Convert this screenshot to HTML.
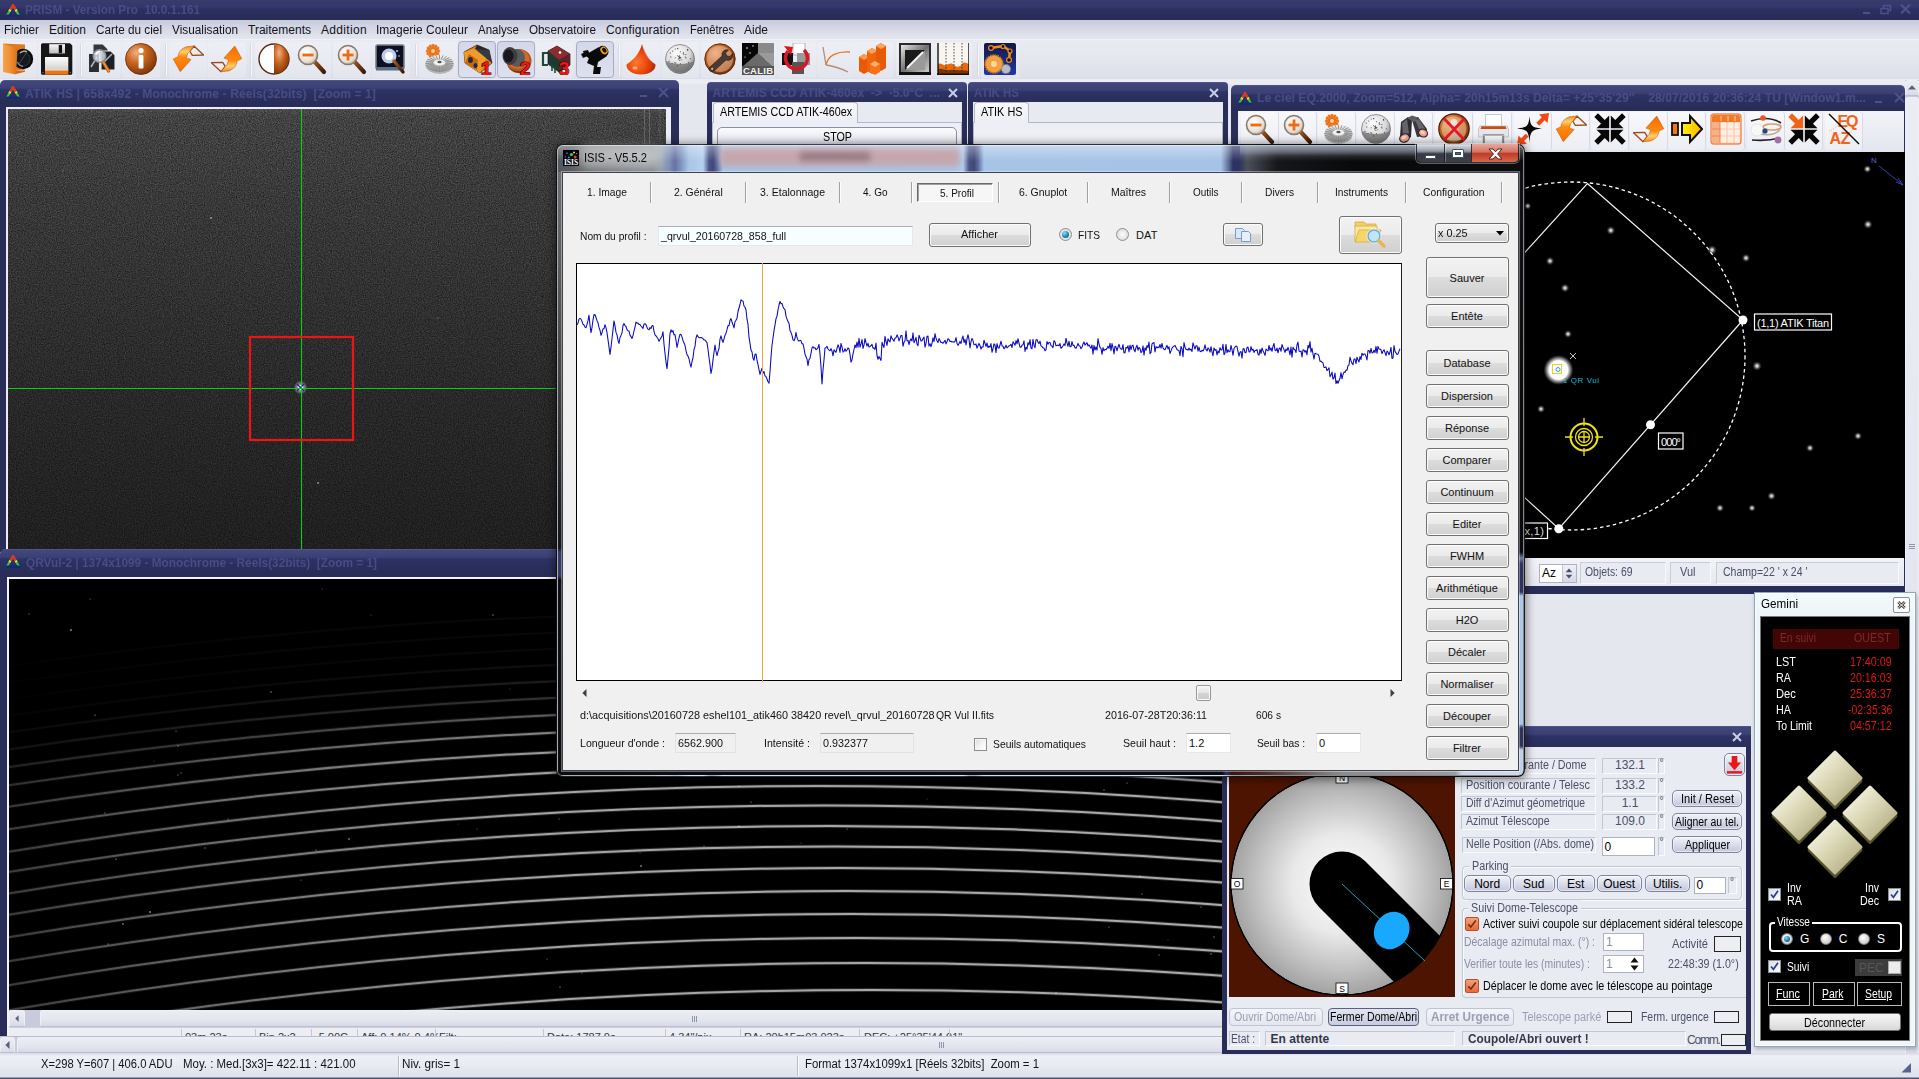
<!DOCTYPE html>
<html lang="fr"><head><meta charset="utf-8"><title>PRISM - Version Pro 10.0.1.161</title>
<style>
html,body{margin:0;padding:0;background:#e5e7ee;overflow:hidden}
#root{position:relative;width:1919px;height:1079px;overflow:hidden;background:#e5e7ee;font-family:"Liberation Sans",sans-serif;font-size:11px}
#root div,#root span.t,#root svg{position:absolute;box-sizing:border-box}
.t{white-space:pre;display:block}
.ls{font-family:"Liberation Sans",sans-serif}
.dv{font-family:"DejaVu Sans",sans-serif}
.dvc{font-family:"DejaVu Sans Condensed","DejaVu Sans",sans-serif}
.lm{font-family:"Liberation Mono",monospace}
.clip{overflow:hidden}
.btn7{border:1px solid #707070;border-radius:3px;background:linear-gradient(#f2f2f2 0%,#ebebeb 49%,#dddddd 50%,#cfcfcf 100%);box-shadow:inset 0 0 0 1px #fcfcfc}
.pbtn{border:1px solid #8084a0;border-radius:5px;background:linear-gradient(#f2f3f9 0%,#dcdfec 45%,#c3c7da 100%);box-shadow:inset 0 0 0 1px rgba(255,255,255,.55)}
.sbtn{border:1px solid #eff0f6;border-bottom-color:#bcbfd0;border-radius:3px;background:linear-gradient(#ebedf4,#e5e7f0 50%,#d8dbe7)}

</style></head>
<body>
<div id="root">
<svg width="0" height="0" style="left:0;top:0"><defs>
<radialGradient id="gCop" cx="35%" cy="30%" r="75%"><stop offset="0" stop-color="#f0b080"/><stop offset=".45" stop-color="#c8641e"/><stop offset="1" stop-color="#7a3408"/></radialGradient>
<linearGradient id="gOr" x1="0" y1="0" x2="1" y2="1"><stop offset="0" stop-color="#ffb050"/><stop offset=".5" stop-color="#f47a10"/><stop offset="1" stop-color="#c85000"/></linearGradient>
<linearGradient id="gUndo" x1="0" y1="0" x2="0" y2="1"><stop offset="0" stop-color="#f08a20"/><stop offset=".22" stop-color="#ffd070"/><stop offset=".42" stop-color="#ff8a10"/><stop offset="1" stop-color="#f86c00"/></linearGradient><linearGradient id="gFold" x1="0" y1="0" x2="1" y2="0"><stop offset="0" stop-color="#f6a44e"/><stop offset=".55" stop-color="#ee8c30"/><stop offset="1" stop-color="#d87018"/></linearGradient><linearGradient id="gShut" x1="0" y1="0" x2="0" y2="1"><stop offset="0" stop-color="#fafafa"/><stop offset="1" stop-color="#bcbcbc"/></linearGradient><linearGradient id="gLabel" x1="0" y1="0" x2="0" y2="1"><stop offset="0" stop-color="#ffffff"/><stop offset=".8" stop-color="#d4d4d4"/><stop offset="1" stop-color="#f0e0d0"/></linearGradient><linearGradient id="gOrV" x1="0" y1="0" x2="0" y2="1"><stop offset="0" stop-color="#ffa040"/><stop offset="1" stop-color="#d85a00"/></linearGradient>
<radialGradient id="gGlass" cx="40%" cy="35%" r="70%"><stop offset="0" stop-color="#ffffff"/><stop offset=".7" stop-color="#e6e0d8"/><stop offset="1" stop-color="#b8aca0"/></radialGradient>
<linearGradient id="gHandle" x1="0" y1="0" x2="1" y2="1"><stop offset="0" stop-color="#a85a20"/><stop offset="1" stop-color="#3a1a08"/></linearGradient>
<radialGradient id="gSph" cx="40%" cy="30%" r="75%"><stop offset="0" stop-color="#ffffff"/><stop offset=".6" stop-color="#d8d8d8"/><stop offset="1" stop-color="#707070"/></radialGradient>
<linearGradient id="gGear" x1="0" y1="0" x2="0" y2="1"><stop offset="0" stop-color="#f4f4f4"/><stop offset="1" stop-color="#8c8c8c"/></linearGradient>
<linearGradient id="gMet" x1="0" y1="0" x2="1" y2="1"><stop offset="0" stop-color="#e8e8e8"/><stop offset=".5" stop-color="#707070"/><stop offset="1" stop-color="#d0d0d0"/></linearGradient>
<linearGradient id="gYel" x1="0" y1="0" x2="1" y2="0"><stop offset="0" stop-color="#fff200"/><stop offset="1" stop-color="#ffb400"/></linearGradient>
<linearGradient id="gBlueBg" x1="0" y1="0" x2="0" y2="1"><stop offset="0" stop-color="#101848"/><stop offset="1" stop-color="#2038a8"/></linearGradient>
<radialGradient id="gCone" cx="35%" cy="60%" r="70%"><stop offset="0" stop-color="#ff7a30"/><stop offset=".6" stop-color="#e84008"/><stop offset="1" stop-color="#a02800"/></radialGradient>
</defs></svg>
<div style="left:0px;top:0px;width:1919px;height:20px;background:linear-gradient(#383c6c 0,#33376a 7px,#2c3062 9px,#272b55 20px)"></div>
<svg style="left:5px;top:3px" width="16" height="14" viewBox="0 0 16 14"><path d="M2.200 12.800L8 2.200l5.800 10.600z" fill="none" stroke="#1a2a7a" stroke-width="2.600" stroke-linejoin="round"/><path d="M2.600 11.500L8 2.200" stroke="#38c838" stroke-width="2.200" stroke-linecap="round"/><path d="M13.400 11.500L8 2.200" stroke="#38c838" stroke-width="2.200" stroke-linecap="round"/><path d="M5.600 5.800L8 2.200l2.400 3.600" fill="none" stroke="#e83020" stroke-width="2.200" stroke-linecap="round" stroke-linejoin="round"/><path d="M4.400 8.200l.9-1.600M11.600 8.200l-.9-1.600" stroke="#f0e030" stroke-width="2.200"/><path d="M2.400 12.600h11.200" stroke="#182878" stroke-width="2.200" stroke-linecap="round"/></svg>
<span class="t ls" style="left:25.0px;top:2.0px;font-size:12px;line-height:16px;color:#474d84;font-weight:700;transform:scaleX(0.9790);transform-origin:0 50%;">PRISM - Version Pro  10.0.1.161</span>
<svg style="left:1863px;top:2px" width="50" height="14" viewBox="0 0 50 14"><rect x="0" y="10" width="7" height="2" fill="#4b5189"/><path d="M18 6.500h7v5h-7zM20.500 6V3.500h7v5H25.500" fill="none" stroke="#4b5189" stroke-width="1.500"/><path d="M38 2.500l9 9M47 2.500l-9 9" stroke="#4b5189" stroke-width="2.200"/></svg>
<div style="left:0px;top:20px;width:1919px;height:20px;background:linear-gradient(#c8cbdb 0,#d5d8e4 45%,#e4e6ee 100%);border-bottom:1px solid #f0f1f6"></div>
<span class="t ls" style="left:4.0px;top:22.0px;font-size:12px;line-height:16px;color:#10121c;transform:scaleX(0.9718);transform-origin:0 50%;">Fichier</span>
<span class="t ls" style="left:49.0px;top:22.0px;font-size:12px;line-height:16px;color:#10121c;letter-spacing:0.042px;">Edition</span>
<span class="t ls" style="left:96.0px;top:22.0px;font-size:12px;line-height:16px;color:#10121c;transform:scaleX(0.9796);transform-origin:0 50%;">Carte du ciel</span>
<span class="t ls" style="left:172.0px;top:22.0px;font-size:12px;line-height:16px;color:#10121c;transform:scaleX(0.9828);transform-origin:0 50%;">Visualisation</span>
<span class="t ls" style="left:248.0px;top:22.0px;font-size:12px;line-height:16px;color:#10121c;letter-spacing:0.009px;">Traitements</span>
<span class="t ls" style="left:321.0px;top:22.0px;font-size:12px;line-height:16px;color:#10121c;letter-spacing:0.328px;">Addition</span>
<span class="t ls" style="left:376.0px;top:22.0px;font-size:12px;line-height:16px;color:#10121c;transform:scaleX(0.9995);transform-origin:0 50%;">Imagerie Couleur</span>
<span class="t ls" style="left:478.0px;top:22.0px;font-size:12px;line-height:16px;color:#10121c;transform:scaleX(0.9601);transform-origin:0 50%;">Analyse</span>
<span class="t ls" style="left:529.0px;top:22.0px;font-size:12px;line-height:16px;color:#10121c;transform:scaleX(0.9752);transform-origin:0 50%;">Observatoire</span>
<span class="t ls" style="left:606.0px;top:22.0px;font-size:12px;line-height:16px;color:#10121c;letter-spacing:0.162px;">Configuration</span>
<span class="t ls" style="left:690.0px;top:22.0px;font-size:12px;line-height:16px;color:#10121c;transform:scaleX(0.9291);transform-origin:0 50%;">Fenêtres</span>
<span class="t ls" style="left:744.0px;top:22.0px;font-size:12px;line-height:16px;color:#10121c;transform:scaleX(0.9987);transform-origin:0 50%;">Aide</span>
<div style="left:0px;top:40px;width:1919px;height:39px;background:linear-gradient(#e9ebf2,#e6e8f0 40%,#dcdfe9 100%)"></div>
<div style="left:0px;top:79px;width:1919px;height:5px;background:#ecedf3"></div>
<div style="left:-1px;top:42px;width:38px;height:36px;background:linear-gradient(#f0f1f7,#e6e8f0);border-radius:3px;opacity:.7"></div>
<svg style="left:2px;top:43px" width="32" height="32" viewBox="0 0 32 32"><path d="M1 .5L23 1.400V26.500L14 27.500 1 29z" fill="#e07a20"/><circle cx="21" cy="16" r="10.200" fill="#0c0c0e"/><circle cx="21" cy="16" r="7" fill="#15181c" stroke="#2c3034" stroke-width="1.200"/><path d="M18 10c2-2 5-2.500 7-1" stroke="#c8d8c8" stroke-width="1.500" fill="none" opacity=".8"/><path d="M15.500 19c1 2.500 3 4 5.500 4.500" stroke="#9ab0c8" stroke-width="1.300" fill="none" opacity=".7"/><path d="M17 21L25 9" stroke="#5a6a5a" stroke-width=".8" opacity=".8"/><path d="M1 .8L15.500 5.500 14 31.600 1 29z" fill="url(#gFold)"/><path d="M14 27.500h9v1.200l-9 2.300z" fill="#d06a14"/></svg>
<div style="left:38px;top:42px;width:38px;height:36px;background:linear-gradient(#f0f1f7,#e6e8f0);border-radius:3px;opacity:.7"></div>
<svg style="left:41px;top:43px" width="32" height="32" viewBox="0 0 32 32"><path d="M1.500 .3H29l2.300 2.300V30.300a1.500 1.500 0 0 1-1.500 1.500H1.500A1.500 1.500 0 0 1 0 30.300V1.800A1.500 1.500 0 0 1 1.500 .3z" fill="#161616"/><rect x="8.200" y="1.200" width="15.800" height="9.300" fill="url(#gShut)"/><rect x="17.750" y="2" width="3.300" height="7.900" fill="#0c0c0c"/><rect x="4" y="14" width="23.300" height="14.700" fill="url(#gLabel)"/><rect x="4" y="27.600" width="23.300" height="4" fill="#f07410"/><circle cx="2" cy="29.500" r=".6" fill="#999"/><circle cx="29.300" cy="29.500" r=".6" fill="#999"/></svg>
<div style="left:83px;top:42px;width:38px;height:36px;background:linear-gradient(#f0f1f7,#e6e8f0);border-radius:3px;opacity:.7"></div>
<svg style="left:86px;top:43px" width="32" height="32" viewBox="0 0 32 32"><path d="M7 1h10l5 5v12H7z" fill="#34373c" stroke="#e8e8e8" stroke-width="1.100"/><path d="M2.500 10.500h11v19h-11z" fill="#2a2d32" stroke="#e8e8e8" stroke-width="1.100"/><path d="M15 8h10l4 4v15H15z" fill="#1c1f24" stroke="#e8e8e8" stroke-width="1.100"/><path d="M5 24l6-10M17 20l9-9" stroke="#cfd4da" stroke-width="1.600" opacity=".8"/><path d="M17.500 19.500l5 8.500" stroke="#c8641c" stroke-width="3.400" stroke-linecap="round"/><path d="M17.500 19.500l5 8.500" stroke="#f0a050" stroke-width="1.200" stroke-linecap="round"/><circle cx="13.500" cy="13" r="6.300" fill="#dfe6ee" fill-opacity=".8" stroke="#8a8e94" stroke-width="1.500"/><path d="M10 12a4 4 0 0 1 4-3.500" stroke="#fff" stroke-width="1.300" fill="none"/></svg>
<div style="left:122px;top:42px;width:38px;height:36px;background:linear-gradient(#f0f1f7,#e6e8f0);border-radius:3px;opacity:.7"></div>
<svg style="left:125px;top:43px" width="32" height="32" viewBox="0 0 32 32"><circle cx="16" cy="16" r="15.500" fill="url(#gCop)" stroke="#6a2c06" stroke-width=".8"/><circle cx="16" cy="7.500" r="2.600" fill="#fff"/><rect x="13.600" y="12" width="4.800" height="13.500" rx="1.200" fill="#fff"/></svg>
<div style="left:169px;top:42px;width:38px;height:36px;background:linear-gradient(#f0f1f7,#e6e8f0);border-radius:3px;opacity:.7"></div>
<svg style="left:172px;top:43px" width="32" height="32" viewBox="0 0 32 32"><path d="M22 3L31.500 12 20.300 12.400 17.800 8.250z" fill="#f6efe8" fill-opacity=".6" stroke="#9a4a20" stroke-width="1.300" stroke-linejoin="round"/><path d="M6 13.700C6.300 9.500 9 5.500 14.500 3.700L22 3 17.800 8.250C16 9.300 15.200 11.500 14.500 14.900L19.100 16.600 8.250 28.700 1.200 16z" fill="url(#gUndo)" stroke="#b85408" stroke-width=".5" stroke-linejoin="round"/></svg>
<div style="left:208px;top:42px;width:38px;height:36px;background:linear-gradient(#f0f1f7,#e6e8f0);border-radius:3px;opacity:.7"></div>
<svg style="left:211px;top:43px" width="32" height="32" viewBox="0 0 32 32"><g transform="rotate(180 16 15.850)"><path d="M22 3L31.500 12 20.300 12.400 17.800 8.250z" fill="#f6efe8" fill-opacity=".6" stroke="#9a4a20" stroke-width="1.300" stroke-linejoin="round"/><path d="M6 13.700C6.300 9.500 9 5.500 14.500 3.700L22 3 17.800 8.250C16 9.300 15.200 11.500 14.500 14.900L19.100 16.600 8.250 28.700 1.200 16z" fill="url(#gUndo)" stroke="#b85408" stroke-width=".5" stroke-linejoin="round"/></g></svg>
<div style="left:255px;top:42px;width:38px;height:36px;background:linear-gradient(#f0f1f7,#e6e8f0);border-radius:3px;opacity:.7"></div>
<svg style="left:258px;top:43px" width="32" height="32" viewBox="0 0 32 32"><circle cx="16" cy="16" r="15" fill="#fff" stroke="#5a2408" stroke-width="1.400"/><path d="M16 1a15 15 0 0 1 0 30z" fill="url(#gCop)"/></svg>
<div style="left:293px;top:42px;width:38px;height:36px;background:linear-gradient(#f0f1f7,#e6e8f0);border-radius:3px;opacity:.7"></div>
<svg style="left:296px;top:43px" width="32" height="32" viewBox="0 0 32 32"><path d="M18 18l10 11" stroke="url(#gHandle)" stroke-width="4.2" stroke-linecap="round"/><circle cx="12" cy="12" r="9.5" fill="url(#gGlass)" stroke="#8a7a6c" stroke-width="1.6"/><rect x="6.5" y="10.6" width="11" height="2.8" fill="#f06a10"/></svg>
<div style="left:333px;top:42px;width:38px;height:36px;background:linear-gradient(#f0f1f7,#e6e8f0);border-radius:3px;opacity:.7"></div>
<svg style="left:336px;top:43px" width="32" height="32" viewBox="0 0 32 32"><path d="M18 18l10 11" stroke="url(#gHandle)" stroke-width="4.2" stroke-linecap="round"/><circle cx="12" cy="12" r="9.5" fill="url(#gGlass)" stroke="#8a7a6c" stroke-width="1.6"/><rect x="6.5" y="10.6" width="11" height="2.8" fill="#f06a10"/><rect x="10.6" y="6.5" width="2.8" height="11" fill="#f06a10"/></svg>
<div style="left:372px;top:42px;width:38px;height:36px;background:linear-gradient(#f0f1f7,#e6e8f0);border-radius:3px;opacity:.7"></div>
<svg style="left:375px;top:43px" width="32" height="32" viewBox="0 0 32 32"><rect x="1" y="2" width="28" height="24" rx="1.500" fill="#0c1020" stroke="#7a8088" stroke-width="1.600"/><rect x="1" y="24" width="28" height="3.500" fill="#5a7088"/><circle cx="14" cy="13" r="7.500" fill="#cfe0ff" opacity=".9"/><circle cx="14" cy="13" r="4" fill="#fff"/><circle cx="22" cy="8" r="1" fill="#9cf"/><circle cx="24" cy="13" r=".8" fill="#9cf"/><path d="M19 18l9 11" stroke="url(#gHandle)" stroke-width="3.400" stroke-linecap="round"/></svg>
<div style="left:419px;top:42px;width:38px;height:36px;background:linear-gradient(#f0f1f7,#e6e8f0);border-radius:3px;opacity:.7"></div>
<svg style="left:422px;top:43px" width="32" height="32" viewBox="0 0 32 32"><g transform="translate(11 8)"><circle r="6.800" fill="#f58a34"/><g stroke="#e06a10" stroke-width="1.100"><path d="M0 0L7.2 0.0"/><path d="M0 0L6.2 3.6"/><path d="M0 0L3.6 6.2"/><path d="M0 0L-0.0 7.2"/><path d="M0 0L-3.6 6.2"/><path d="M0 0L-6.2 3.6"/><path d="M0 0L-7.2 -0.0"/><path d="M0 0L-6.2 -3.6"/><path d="M0 0L-3.6 -6.2"/><path d="M0 0L0.0 -7.2"/><path d="M0 0L3.6 -6.2"/><path d="M0 0L6.2 -3.6"/></g><circle r="2" fill="#ffd0a0"/></g><ellipse cx="17.500" cy="22" rx="14" ry="9" fill="#b4b4b4"/><ellipse cx="17.500" cy="20.500" rx="14" ry="8.500" fill="url(#gGear)"/><g stroke="#8a8a8a" stroke-width=".9"><path d="M23.5 20.0L31.5 20.5"/><path d="M23.3 20.9L31.0 22.7"/><path d="M22.7 21.7L29.6 24.8"/><path d="M21.7 22.4L27.4 26.5"/><path d="M20.5 22.9L24.5 27.9"/><path d="M19.1 23.3L21.1 28.7"/><path d="M17.5 23.4L17.5 29.0"/><path d="M15.9 23.3L13.9 28.7"/><path d="M14.5 22.9L10.5 27.9"/><path d="M13.3 22.4L7.6 26.5"/><path d="M12.3 21.7L5.4 24.7"/><path d="M11.7 20.9L4.0 22.7"/><path d="M11.5 20.0L3.5 20.5"/><path d="M11.7 19.1L4.0 18.3"/><path d="M12.3 18.3L5.4 16.2"/><path d="M13.3 17.6L7.6 14.5"/><path d="M14.5 17.1L10.5 13.1"/><path d="M15.9 16.7L13.9 12.3"/><path d="M17.5 16.6L17.5 12.0"/><path d="M19.1 16.7L21.1 12.3"/><path d="M20.5 17.1L24.5 13.1"/><path d="M21.7 17.6L27.4 14.5"/><path d="M22.7 18.3L29.6 16.3"/><path d="M23.3 19.1L31.0 18.3"/></g><ellipse cx="17.500" cy="19.500" rx="6" ry="3.200" fill="#f2f2f2" stroke="#aaa" stroke-width=".5"/><ellipse cx="17.500" cy="19" rx="2.200" ry="1.200" fill="#555"/></svg>
<div style="left:458px;top:41px;width:38px;height:37px;background:linear-gradient(#d3d7e8,#dde0ee);border:1px solid #a6acc6;border-radius:4px"></div>
<svg style="left:461px;top:43px" width="32" height="32" viewBox="0 0 32 32"><path d="M3 9L16 2l12 5 3 13-12 10L4 20z" fill="#e88418" stroke="#3a1a04" stroke-width=".7"/><path d="M16 2l12 5 3 13-6-5-11-9z" fill="#2a2420"/><path d="M3 9l11-3 11 9-6 15L4 20z" fill="#f09a28"/><path d="M4 20l4-9 9 6-1 10z" fill="#c8680c"/><path d="M14 6l11 9 6 5-3-13z" fill="#3a4a68" opacity=".55"/><ellipse cx="9.500" cy="17" rx="2.400" ry="3" fill="#1e2a4a"/><ellipse cx="14.500" cy="22.500" rx="2" ry="2.500" fill="#1e2a4a"/><text x="25" y="31.500" font-family="Liberation Sans,sans-serif" font-weight="700" font-size="19" fill="#f41414" stroke="#2a0000" stroke-width="1.100" paint-order="stroke" text-anchor="middle">1</text></svg>
<div style="left:497px;top:41px;width:38px;height:37px;background:linear-gradient(#d3d7e8,#dde0ee);border:1px solid #a6acc6;border-radius:4px"></div>
<svg style="left:500px;top:43px" width="32" height="32" viewBox="0 0 32 32"><ellipse cx="19" cy="18" rx="12.500" ry="12" fill="#b8561c"/><ellipse cx="18" cy="16" rx="11" ry="10" fill="#d06a28"/><path d="M8 24c6 6 18 6 22-2-2 8-14 12-22 2z" fill="#7a3408"/><ellipse cx="17" cy="15" rx="8" ry="9" fill="#5a5a5e"/><ellipse cx="10" cy="13" rx="7.500" ry="9" fill="#3e3e42"/><ellipse cx="8.500" cy="13" rx="5" ry="6.500" fill="#18181a"/><text x="25" y="31.500" font-family="Liberation Sans,sans-serif" font-weight="700" font-size="19" fill="#f41414" stroke="#2a0000" stroke-width="1.100" paint-order="stroke" text-anchor="middle">2</text></svg>
<div style="left:536px;top:42px;width:38px;height:36px;background:linear-gradient(#f0f1f7,#e6e8f0);border-radius:3px;opacity:.7"></div>
<svg style="left:539px;top:43px" width="32" height="32" viewBox="0 0 32 32"><path d="M9 8l9-5 13 8v11l-11 7L9 21z" fill="#1e3a30" stroke="#0c1814" stroke-width=".7"/><path d="M18 3l13 8-11 6L9 8z" fill="#8a2c30"/><path d="M20 17l11-6v11l-11 7z" fill="#5a2428"/><path d="M9 10H4v12h5" fill="none" stroke="#1e4a38" stroke-width="2.200"/><circle cx="21" cy="9.500" r="1.300" fill="#fff"/><path d="M13 22v6M16 24v6" stroke="#1e4a38" stroke-width="1.600"/><text x="25" y="31.500" font-family="Liberation Sans,sans-serif" font-weight="700" font-size="19" fill="#f41414" stroke="#2a0000" stroke-width="1.100" paint-order="stroke" text-anchor="middle">3</text></svg>
<div style="left:576px;top:41px;width:38px;height:37px;background:linear-gradient(#d3d7e8,#dde0ee);border:1px solid #a6acc6;border-radius:4px"></div>
<svg style="left:579px;top:43px" width="32" height="32" viewBox="0 0 32 32"><path d="M6 12l14-8 8 9-12 8z" fill="#0a0a0a"/><path d="M2 11l7-3 2 4-7 3z" fill="#0a0a0a"/><path d="M10 15l9 4-1 5h4l-1 7h-7l1-8-7-3z" fill="#0a0a0a"/><path d="M4 8l5-1 1 3-5 1z" fill="#0a0a0a"/><ellipse cx="24.500" cy="8" rx="4.600" ry="5.600" transform="rotate(-38 24.500 8)" fill="#0a0a0a"/><ellipse cx="25" cy="7.500" rx="3.200" ry="4.200" transform="rotate(-38 25 7.500)" fill="#f0a020"/><ellipse cx="25.300" cy="7.200" rx="1.900" ry="2.700" transform="rotate(-38 25.300 7.200)" fill="#1a0a00"/></svg>
<div style="left:622px;top:42px;width:38px;height:36px;background:linear-gradient(#f0f1f7,#e6e8f0);border-radius:3px;opacity:.7"></div>
<svg style="left:625px;top:43px" width="32" height="32" viewBox="0 0 32 32"><path d="M17 1c1.500 8 5 15 13.500 20.500C31 27 25 31.500 16 31.500S1 27 1.500 21.500C10 16 15 9 17 1z" fill="url(#gCone)"/><path d="M17 1c1.500 8 5 15 13.500 20.500-4-2-9-8-13.500-20.500z" fill="#8a2000" opacity=".45"/><ellipse cx="10" cy="25" rx="2.600" ry="1.700" fill="#ffb080" opacity=".85"/></svg>
<div style="left:661px;top:42px;width:38px;height:36px;background:linear-gradient(#f0f1f7,#e6e8f0);border-radius:3px;opacity:.7"></div>
<svg style="left:664px;top:43px" width="32" height="32" viewBox="0 0 32 32"><circle cx="16" cy="16" r="14.500" fill="url(#gSph)" stroke="#555" stroke-width=".6"/><path d="M1.800 18a14.500 14.500 0 0 0 28.400 0c-6 4-22 4-28.400 0z" fill="#6e6e6e" opacity=".75"/><circle cx="16.5" cy="20.8" r=".55" fill="#444"/><circle cx="10.8" cy="19.7" r=".55" fill="#444"/><circle cx="15.4" cy="14.5" r=".55" fill="#444"/><circle cx="26.4" cy="15.7" r=".55" fill="#444"/><circle cx="15.8" cy="17.5" r=".55" fill="#444"/><circle cx="21.9" cy="14.9" r=".55" fill="#444"/><circle cx="19.1" cy="10.7" r=".55" fill="#444"/><circle cx="14.8" cy="13.8" r=".55" fill="#444"/><circle cx="8.8" cy="8.1" r=".55" fill="#444"/><circle cx="6.8" cy="13.9" r=".55" fill="#444"/><circle cx="15.6" cy="14.4" r=".55" fill="#444"/><circle cx="16.4" cy="8.7" r=".55" fill="#444"/><circle cx="15.9" cy="15.3" r=".55" fill="#444"/><circle cx="19.9" cy="11.2" r=".55" fill="#444"/><circle cx="13.9" cy="5.8" r=".55" fill="#444"/><circle cx="13.4" cy="5.5" r=".55" fill="#444"/><circle cx="8.1" cy="20.2" r=".55" fill="#444"/><circle cx="5.0" cy="18.4" r=".55" fill="#444"/><circle cx="16.9" cy="14.3" r=".55" fill="#444"/><circle cx="17.8" cy="16.7" r=".55" fill="#444"/><circle cx="21.3" cy="14.0" r=".55" fill="#444"/><circle cx="13.4" cy="12.7" r=".55" fill="#444"/><circle cx="11.2" cy="14.8" r=".55" fill="#444"/><circle cx="11.7" cy="20.0" r=".55" fill="#444"/><circle cx="6.2" cy="10.1" r=".55" fill="#444"/><circle cx="11.2" cy="6.0" r=".55" fill="#444"/><circle cx="23.7" cy="6.7" r=".55" fill="#444"/><circle cx="15.0" cy="13.5" r=".55" fill="#444"/><circle cx="23.7" cy="7.1" r=".55" fill="#444"/><circle cx="21.9" cy="11.6" r=".55" fill="#444"/><circle cx="15.4" cy="12.8" r=".55" fill="#444"/><circle cx="19.5" cy="9.7" r=".55" fill="#444"/><circle cx="15.8" cy="15.7" r=".55" fill="#444"/><circle cx="23.5" cy="6.6" r=".55" fill="#444"/><circle cx="24.5" cy="19.5" r=".55" fill="#444"/><circle cx="14.4" cy="15.9" r=".55" fill="#444"/><circle cx="13.4" cy="22.9" r=".55" fill="#444"/><circle cx="16.4" cy="14.7" r=".55" fill="#444"/></svg>
<div style="left:701px;top:42px;width:38px;height:36px;background:linear-gradient(#f0f1f7,#e6e8f0);border-radius:3px;opacity:.7"></div>
<svg style="left:704px;top:43px" width="32" height="32" viewBox="0 0 32 32"><circle cx="16" cy="16" r="15.200" fill="url(#gCop)" stroke="#5a2408" stroke-width="1"/><circle cx="16" cy="16" r="13" fill="#e8b89c" opacity=".55"/><path d="M6 24l12-11a5 5 0 0 1 6.500-6l-3 3 1.500 3 3 .5 2.500-3a5 5 0 0 1-6.500 6.500L10 28a2.800 2.800 0 0 1-4-4z" fill="#4a3a34" stroke="#2a1a14" stroke-width=".6"/><circle cx="8.200" cy="25.800" r="1.100" fill="#e8b89c"/></svg>
<div style="left:739px;top:42px;width:38px;height:36px;background:linear-gradient(#f0f1f7,#e6e8f0);border-radius:3px;opacity:.7"></div>
<svg style="left:742px;top:43px" width="32" height="32" viewBox="0 0 32 32"><rect x="0" y="0" width="16" height="24" fill="#060606"/><rect x="16" y="0" width="16" height="16" fill="#8a8a8a"/><path d="M0 24L16 10l16 14z" fill="#6a6a6a"/><path d="M16 10l16 14V10z" fill="#9a9a9a"/><circle cx="5" cy="5" r=".8" fill="#fff"/><circle cx="11" cy="3" r=".7" fill="#fff"/><circle cx="8" cy="10" r=".7" fill="#fff"/><circle cx="3" cy="14" r=".6" fill="#fff"/><rect x="0" y="23" width="32" height="9" fill="#555"/><text x="16" y="31" font-family="Liberation Sans,sans-serif" font-weight="700" font-size="9.500" fill="#f4f4f4" text-anchor="middle" textLength="30">CALIB</text></svg>
<div style="left:778px;top:42px;width:38px;height:36px;background:linear-gradient(#f0f1f7,#e6e8f0);border-radius:3px;opacity:.7"></div>
<svg style="left:781px;top:43px" width="32" height="32" viewBox="0 0 32 32"><rect x="12" y="0" width="12" height="12" fill="#fff" stroke="#888" stroke-width=".6"/><rect x="1" y="10" width="11" height="12" fill="#111"/><rect x="16" y="10" width="13" height="12" fill="#9a9a9a"/><rect x="11" y="19" width="12" height="12" fill="#555"/><path d="M7 8a11 11 0 1 0 16-1" fill="none" stroke="#d81820" stroke-width="3.400"/><path d="M3 3l9 1-2 8z" fill="#d81820"/></svg>
<div style="left:817px;top:42px;width:38px;height:36px;background:linear-gradient(#f0f1f7,#e6e8f0);border-radius:3px;opacity:.7"></div>
<svg style="left:820px;top:43px" width="32" height="32" viewBox="0 0 32 32"><path d="M3 4l3 18" stroke="#b88a78" stroke-width="1.300" fill="none"/><path d="M6 22c2-10 12-14 24-13" stroke="#e07828" stroke-width="1.400" fill="none"/><path d="M6 22c8 1 16 4 22 7" stroke="#b88a78" stroke-width="1.300" fill="none"/></svg>
<div style="left:855px;top:42px;width:38px;height:36px;background:linear-gradient(#f0f1f7,#e6e8f0);border-radius:3px;opacity:.7"></div>
<svg style="left:858px;top:43px" width="32" height="32" viewBox="0 0 32 32"><path d="M1 14l5-3 5 3v14l-5 3-5-3z" fill="#e85a08"/><path d="M1 14l5-3 5 3-5 3z" fill="#ff9a48"/><path d="M9 8l5-3 5 3v20l-5 3-5-3z" fill="#f06410"/><path d="M9 8l5-3 5 3-5 3z" fill="#ffa050"/><path d="M18 3l5-3 5 3v22l-5 3-5-3z" fill="#e85a08"/><path d="M18 3l5-3 5 3-5 3z" fill="#ffa858"/><path d="M12 21l5-3 5 3v8l-5 3-5-3z" fill="#f87018"/><path d="M12 21l5-3 5 3-5 3z" fill="#ffb068"/></svg>
<div style="left:896px;top:42px;width:38px;height:36px;background:linear-gradient(#f0f1f7,#e6e8f0);border-radius:3px;opacity:.7"></div>
<svg style="left:899px;top:43px" width="32" height="32" viewBox="0 0 32 32"><rect x="0" y="0" width="32" height="32" fill="#2a2a2a"/><rect x="2" y="2" width="28" height="28" fill="url(#gMet)"/><rect x="6" y="7" width="20" height="20" fill="#1a1a1a"/><path d="M6 27L26 7v20z" fill="#9a9a9a"/><path d="M8 25L24 9" stroke="#f4f4f4" stroke-width="2"/><rect x="0" y="29" width="32" height="3" fill="#111"/></svg>
<div style="left:934px;top:42px;width:38px;height:36px;background:linear-gradient(#f0f1f7,#e6e8f0);border-radius:3px;opacity:.7"></div>
<svg style="left:937px;top:43px" width="32" height="32" viewBox="0 0 32 32"><rect x="0" y="0" width="32" height="32" fill="#fff"/><rect x="1" y="0" width="31" height="31" fill="#f8f4f0"/><path d="M1 21c3-2 5 2 8 1s5-3 8 0 6 2 8-1 4-1 7 0v11H1z" fill="#e86a10"/><path d="M1 26c4-1 8 2 12 1s8 1 12 0l7 1v4H1z" fill="#7a3404"/><path d="M1 0v32M32 0v32" stroke="#111" stroke-width="1.400"/><path d="M9 0v32M17 0v32M25 0v32" stroke="#222" stroke-width=".8" stroke-dasharray="1.500 1.500"/><rect x="0" y="30.500" width="32" height="1.500" fill="#111"/></svg>
<div style="left:981px;top:42px;width:38px;height:36px;background:linear-gradient(#f0f1f7,#e6e8f0);border-radius:3px;opacity:.7"></div>
<svg style="left:984px;top:43px" width="32" height="32" viewBox="0 0 32 32"><rect x="0" y="0" width="32" height="32" rx="2" fill="url(#gBlueBg)"/><path d="M7 5l12-2 7 5-1 9" fill="none" stroke="#f08a18" stroke-width="2.600" stroke-linejoin="round"/><circle cx="7" cy="5" r="2.400" fill="#111" stroke="#f08a18" stroke-width="1.200"/><circle cx="19" cy="3.500" r="2" fill="#111" stroke="#f08a18" stroke-width="1.200"/><circle cx="26" cy="8" r="2" fill="#111" stroke="#f08a18" stroke-width="1.200"/><circle cx="25" cy="17" r="2.400" fill="#111" stroke="#f08a18" stroke-width="1.200"/><circle cx="10" cy="21" r="9" fill="#f0a040" stroke="#c87010" stroke-width="1.800" stroke-dasharray="1.400 1"/><circle cx="10" cy="21" r="3" fill="#ffd898"/><circle cx="22" cy="26" r="4.500" fill="#b8bcc4" stroke="#808690" stroke-width="1.200" stroke-dasharray="1 1"/></svg>
<div style="left:80px;top:44px;width:1px;height:32px;background:#d6d9e4"></div>
<div style="left:81px;top:44px;width:1px;height:32px;background:#f6f7fb"></div>
<div style="left:165px;top:44px;width:1px;height:32px;background:#d6d9e4"></div>
<div style="left:166px;top:44px;width:1px;height:32px;background:#f6f7fb"></div>
<div style="left:250px;top:44px;width:1px;height:32px;background:#d6d9e4"></div>
<div style="left:251px;top:44px;width:1px;height:32px;background:#f6f7fb"></div>
<div style="left:415px;top:44px;width:1px;height:32px;background:#d6d9e4"></div>
<div style="left:416px;top:44px;width:1px;height:32px;background:#f6f7fb"></div>
<div style="left:618px;top:44px;width:1px;height:32px;background:#d6d9e4"></div>
<div style="left:619px;top:44px;width:1px;height:32px;background:#f6f7fb"></div>
<div style="left:977px;top:44px;width:1px;height:32px;background:#d6d9e4"></div>
<div style="left:978px;top:44px;width:1px;height:32px;background:#f6f7fb"></div>
<div style="left:0px;top:80px;width:679px;height:472px;background:linear-gradient(#5d6396 0,#42477e 1px,#3c4173 8px,#2e3366 10px,#2a2f5e 16px,#272d56 26px,#282e58 27px),#282e58;background-repeat:no-repeat;background-color:#282e58;border-radius:5px 5px 0 0"></div>
<svg style="left:5px;top:85px" width="16" height="14" viewBox="0 0 16 14"><path d="M2.200 12.800L8 2.200l5.800 10.600z" fill="none" stroke="#1a2a7a" stroke-width="2.600" stroke-linejoin="round"/><path d="M2.600 11.500L8 2.200" stroke="#38c838" stroke-width="2.200" stroke-linecap="round"/><path d="M13.400 11.500L8 2.200" stroke="#38c838" stroke-width="2.200" stroke-linecap="round"/><path d="M5.600 5.800L8 2.200l2.400 3.600" fill="none" stroke="#e83020" stroke-width="2.200" stroke-linecap="round" stroke-linejoin="round"/><path d="M4.400 8.200l.9-1.600M11.600 8.200l-.9-1.600" stroke="#f0e030" stroke-width="2.200"/><path d="M2.400 12.600h11.200" stroke="#182878" stroke-width="2.200" stroke-linecap="round"/></svg>
<span class="t ls" style="left:25.0px;top:85.5px;font-size:12px;line-height:16px;color:#474d84;font-weight:700;letter-spacing:0.140px;">ATIK HS | 658x492 - Monochrome - Réels(32bits)  [Zoom = 1]</span>
<svg style="left:638px;top:86px" width="34" height="14" viewBox="0 0 34 14"><rect x="2" y="9" width="7" height="2" fill="#4b5189"/><path d="M21 2l9 9M30 2l-9 9" stroke="#4b5189" stroke-width="2.200"/></svg>
<div style="left:6px;top:107px;width:665px;height:445px;background:#ececf8"></div>
<svg style="left:8px;top:109px" width="658" height="443" viewBox="0 1 658 443">
<defs><filter id="nz" x="0" y="0" width="100%" height="100%" color-interpolation-filters="sRGB"><feTurbulence type="fractalNoise" baseFrequency="0.85" numOctaves="2" seed="4" result="t"/><feColorMatrix type="matrix" values="0.34 0 0 0 0.09  0.34 0 0 0 0.09  0.34 0 0 0 0.09  0 0 0 0 1"/></filter>
<radialGradient id="stg2"><stop offset="0" stop-color="#fff" stop-opacity=".95"/><stop offset=".4" stop-color="#fff" stop-opacity=".55"/><stop offset="1" stop-color="#fff" stop-opacity="0"/></radialGradient><linearGradient id="vg" x1="0" y1="0" x2="0" y2="1"><stop offset="0" stop-color="#fff" stop-opacity=".07"/><stop offset=".03" stop-color="#000" stop-opacity="0"/><stop offset=".2" stop-color="#000" stop-opacity=".14"/><stop offset=".38" stop-color="#000" stop-opacity=".24"/><stop offset=".65" stop-color="#000" stop-opacity=".39"/><stop offset="1" stop-color="#000" stop-opacity=".53"/></linearGradient></defs>
<rect width="658" height="444" fill="#353535"/>
<rect width="658" height="444" filter="url(#nz)"/>
<rect width="658" height="444" fill="url(#vg)"/>
<path d="M636.500 0v444M641.500 0v444" stroke="#8a8a8a" stroke-width="1" opacity=".5"/><path d="M652 0v444" stroke="#777" stroke-width="1" opacity=".4"/>
<circle cx="292.500" cy="279.500" r="7" fill="url(#stg2)"/><circle cx="292.500" cy="279.500" r="2.600" fill="#fff"/>
<path d="M289 276l7 7M296 276l-7 7" stroke="#1818c0" stroke-width="1.200"/>
<circle cx="203" cy="110" r=".8" fill="#ddd"/><circle cx="310" cy="375" r=".8" fill="#ddd"/><circle cx="55" cy="62" r=".6" fill="#aaa"/><circle cx="430" cy="210" r=".6" fill="#aaa"/>
<path d="M293.500 0v444M0 280.500h658" stroke="#0ccc16" stroke-width="1.100"/>
<rect x="242" y="229" width="103" height="103" fill="none" stroke="#ee1414" stroke-width="2.200"/>
</svg>
<div style="left:0px;top:549px;width:1300px;height:510px;background:linear-gradient(#5d6396 0,#42477e 1px,#3c4173 8px,#2e3366 10px,#2a2f5e 16px,#272d56 26px,#282e58 27px),#282e58;background-repeat:no-repeat;background-color:#282e58;border-radius:5px 5px 0 0"></div>
<svg style="left:5px;top:554px" width="16" height="14" viewBox="0 0 16 14"><path d="M2.200 12.800L8 2.200l5.800 10.600z" fill="none" stroke="#1a2a7a" stroke-width="2.600" stroke-linejoin="round"/><path d="M2.600 11.500L8 2.200" stroke="#38c838" stroke-width="2.200" stroke-linecap="round"/><path d="M13.400 11.500L8 2.200" stroke="#38c838" stroke-width="2.200" stroke-linecap="round"/><path d="M5.600 5.800L8 2.200l2.400 3.600" fill="none" stroke="#e83020" stroke-width="2.200" stroke-linecap="round" stroke-linejoin="round"/><path d="M4.400 8.200l.9-1.600M11.600 8.200l-.9-1.600" stroke="#f0e030" stroke-width="2.200"/><path d="M2.400 12.600h11.200" stroke="#182878" stroke-width="2.200" stroke-linecap="round"/></svg>
<span class="t ls" style="left:26.0px;top:555.0px;font-size:12px;line-height:16px;color:#474d84;font-weight:700;transform:scaleX(0.9865);transform-origin:0 50%;">QRVul-2 | 1374x1099 - Monochrome - Réels(32bits)  [Zoom = 1]</span>
<div style="left:7px;top:577px;width:1300px;height:470px;background:#f3f3f8"></div>
<svg style="left:9px;top:579px" width="1291" height="431" viewBox="0 0 1291 431">
<defs><filter id="ob" x="-1%" y="-1%" width="102%" height="102%"><feGaussianBlur stdDeviation="0.55"/></filter><linearGradient id="og" gradientUnits="userSpaceOnUse" x1="0" y1="0" x2="1291" y2="0"><stop offset="0" stop-color="#fff" stop-opacity=".3"/><stop offset=".15" stop-color="#fff" stop-opacity=".55"/><stop offset=".42" stop-color="#fff" stop-opacity=".9"/><stop offset="1" stop-color="#fff" stop-opacity=".95"/></linearGradient></defs>
<rect width="1291" height="431" fill="#000"/>
<g fill="none" stroke="url(#og)" stroke-width="3.800" opacity=".28"><path d="M-9 88.2Q641 -4.4 1291 58.4" stroke-opacity="0.03"/><path d="M-9 104.8Q641 11.7 1291 74.0" stroke-opacity="0.03"/><path d="M-9 121.4Q641 27.8 1291 89.6" stroke-opacity="0.03"/><path d="M-9 138.0Q641 43.9 1291 105.2" stroke-opacity="0.05"/><path d="M-9 154.6Q641 60.0 1291 120.8" stroke-opacity="0.10"/><path d="M-9 171.7Q641 76.6 1291 136.9" stroke-opacity="0.18"/><path d="M-9 189.4Q641 93.7 1291 153.5" stroke-opacity="0.34"/><path d="M-9 207.5Q641 111.3 1291 170.6" stroke-opacity="0.50"/><path d="M-9 229.0Q641 129.4 1291 189.8" stroke-opacity="0.60"/><path d="M-9 251.6Q641 148.5 1291 210.0" stroke-opacity="0.64"/><path d="M-9 274.2Q641 167.6 1291 230.1" stroke-opacity="0.64"/><path d="M-9 294.5Q641 187.3 1291 249.1" stroke-opacity="0.64"/><path d="M-9 315.9Q641 208.0 1291 269.1" stroke-opacity="0.64"/><path d="M-9 337.2Q641 228.7 1291 289.1" stroke-opacity="0.64"/><path d="M-9 359.7Q641 250.4 1291 310.1" stroke-opacity="0.64"/><path d="M-9 383.7Q641 273.6 1291 332.6" stroke-opacity="0.64"/><path d="M-9 407.7Q641 296.8 1291 355.0" stroke-opacity="0.64"/><path d="M-9 432.7Q641 321.1 1291 378.5" stroke-opacity="0.64"/><path d="M-9 458.8Q641 346.4 1291 402.9" stroke-opacity="0.64"/><path d="M-9 487.0Q641 373.7 1291 429.3" stroke-opacity="0.64"/><path d="M-9 516.3Q641 402.0 1291 456.7" stroke-opacity="0.64"/></g>
<g fill="none" stroke="url(#og)" stroke-width="2" filter="url(#ob)"><path d="M-9 88.2Q641 -4.4 1291 58.4" stroke-opacity="0.03"/><path d="M-9 104.8Q641 11.7 1291 74.0" stroke-opacity="0.03"/><path d="M-9 121.4Q641 27.8 1291 89.6" stroke-opacity="0.03"/><path d="M-9 138.0Q641 43.9 1291 105.2" stroke-opacity="0.05"/><path d="M-9 154.6Q641 60.0 1291 120.8" stroke-opacity="0.10"/><path d="M-9 171.7Q641 76.6 1291 136.9" stroke-opacity="0.18"/><path d="M-9 189.4Q641 93.7 1291 153.5" stroke-opacity="0.34"/><path d="M-9 207.5Q641 111.3 1291 170.6" stroke-opacity="0.50"/><path d="M-9 229.0Q641 129.4 1291 189.8" stroke-opacity="0.60"/><path d="M-9 251.6Q641 148.5 1291 210.0" stroke-opacity="0.64"/><path d="M-9 274.2Q641 167.6 1291 230.1" stroke-opacity="0.64"/><path d="M-9 294.5Q641 187.3 1291 249.1" stroke-opacity="0.64"/><path d="M-9 315.9Q641 208.0 1291 269.1" stroke-opacity="0.64"/><path d="M-9 337.2Q641 228.7 1291 289.1" stroke-opacity="0.64"/><path d="M-9 359.7Q641 250.4 1291 310.1" stroke-opacity="0.64"/><path d="M-9 383.7Q641 273.6 1291 332.6" stroke-opacity="0.64"/><path d="M-9 407.7Q641 296.8 1291 355.0" stroke-opacity="0.64"/><path d="M-9 432.7Q641 321.1 1291 378.5" stroke-opacity="0.64"/><path d="M-9 458.8Q641 346.4 1291 402.9" stroke-opacity="0.64"/><path d="M-9 487.0Q641 373.7 1291 429.3" stroke-opacity="0.64"/><path d="M-9 516.3Q641 402.0 1291 456.7" stroke-opacity="0.64"/></g>
<circle cx="550" cy="240" r="0.6" fill="#fff" opacity="0.57"/><circle cx="1035" cy="85" r="0.8" fill="#fff" opacity="0.59"/><circle cx="745" cy="83" r="0.6" fill="#fff" opacity="0.48"/><circle cx="114" cy="345" r="0.8" fill="#fff" opacity="0.68"/><circle cx="723" cy="171" r="0.6" fill="#fff" opacity="0.69"/><circle cx="747" cy="71" r="0.5" fill="#fff" opacity="0.80"/><circle cx="81" cy="20" r="0.5" fill="#fff" opacity="0.66"/><circle cx="943" cy="142" r="0.8" fill="#fff" opacity="0.81"/><circle cx="631" cy="274" r="0.6" fill="#fff" opacity="0.30"/><circle cx="107" cy="280" r="0.6" fill="#fff" opacity="0.90"/><circle cx="1205" cy="358" r="0.8" fill="#fff" opacity="0.45"/><circle cx="918" cy="220" r="0.5" fill="#fff" opacity="0.34"/><circle cx="928" cy="173" r="0.6" fill="#fff" opacity="0.53"/><circle cx="1159" cy="361" r="0.5" fill="#fff" opacity="0.43"/><circle cx="1122" cy="27" r="0.6" fill="#fff" opacity="0.89"/><circle cx="484" cy="36" r="0.8" fill="#fff" opacity="0.42"/><circle cx="818" cy="146" r="0.6" fill="#fff" opacity="0.50"/><circle cx="1167" cy="323" r="0.5" fill="#fff" opacity="0.38"/><circle cx="857" cy="10" r="0.6" fill="#fff" opacity="0.78"/><circle cx="219" cy="240" r="0.6" fill="#fff" opacity="0.61"/><circle cx="1192" cy="328" r="0.6" fill="#fff" opacity="0.69"/><circle cx="145" cy="182" r="0.5" fill="#fff" opacity="0.30"/><circle cx="1047" cy="414" r="0.8" fill="#fff" opacity="0.48"/><circle cx="1071" cy="93" r="0.6" fill="#fff" opacity="0.90"/><circle cx="730" cy="247" r="0.5" fill="#fff" opacity="0.89"/><circle cx="262" cy="113" r="0.8" fill="#fff" opacity="0.50"/><circle cx="362" cy="36" r="0.5" fill="#fff" opacity="0.43"/><circle cx="772" cy="12" r="0.6" fill="#fff" opacity="0.52"/><circle cx="551" cy="408" r="0.6" fill="#fff" opacity="0.80"/><circle cx="169" cy="167" r="0.8" fill="#fff" opacity="0.39"/><circle cx="1100" cy="348" r="0.5" fill="#fff" opacity="0.74"/><circle cx="196" cy="269" r="0.8" fill="#fff" opacity="0.42"/><circle cx="1150" cy="376" r="0.8" fill="#fff" opacity="0.35"/><circle cx="62" cy="51" r="0.8" fill="#fff" opacity="0.88"/><circle cx="292" cy="301" r="0.6" fill="#fff" opacity="0.55"/><circle cx="1095" cy="211" r="0.8" fill="#fff" opacity="0.41"/><circle cx="873" cy="34" r="0.5" fill="#fff" opacity="0.59"/><circle cx="792" cy="264" r="0.5" fill="#fff" opacity="0.47"/><circle cx="1110" cy="91" r="0.5" fill="#fff" opacity="0.34"/><circle cx="501" cy="110" r="0.5" fill="#fff" opacity="0.41"/><circle cx="449" cy="245" r="0.5" fill="#fff" opacity="0.36"/><circle cx="172" cy="194" r="0.6" fill="#fff" opacity="0.69"/><circle cx="838" cy="250" r="0.5" fill="#fff" opacity="0.65"/><circle cx="1118" cy="204" r="0.6" fill="#fff" opacity="0.72"/><circle cx="1165" cy="14" r="0.8" fill="#fff" opacity="0.34"/><circle cx="86" cy="136" r="0.5" fill="#fff" opacity="0.90"/><circle cx="96" cy="234" r="0.8" fill="#fff" opacity="0.33"/><circle cx="1133" cy="315" r="0.5" fill="#fff" opacity="0.78"/><circle cx="1108" cy="153" r="0.8" fill="#fff" opacity="0.58"/><circle cx="99" cy="365" r="0.5" fill="#fff" opacity="0.82"/><circle cx="695" cy="267" r="0.6" fill="#fff" opacity="0.53"/><circle cx="20" cy="35" r="0.5" fill="#fff" opacity="0.68"/><circle cx="1202" cy="375" r="0.8" fill="#fff" opacity="0.50"/><circle cx="1131" cy="297" r="0.6" fill="#fff" opacity="0.56"/><circle cx="1015" cy="40" r="0.8" fill="#fff" opacity="0.32"/><circle cx="730" cy="207" r="0.5" fill="#fff" opacity="0.87"/><circle cx="141" cy="333" r="0.8" fill="#fff" opacity="0.85"/><circle cx="313" cy="10" r="0.6" fill="#fff" opacity="0.39"/><circle cx="742" cy="223" r="0.6" fill="#fff" opacity="0.70"/><circle cx="538" cy="380" r="0.6" fill="#fff" opacity="0.54"/><circle cx="307" cy="271" r="0.5" fill="#fff" opacity="0.83"/><circle cx="468" cy="250" r="0.6" fill="#fff" opacity="0.43"/><circle cx="167" cy="152" r="0.5" fill="#fff" opacity="0.73"/><circle cx="1150" cy="121" r="0.5" fill="#fff" opacity="0.37"/><circle cx="573" cy="394" r="0.6" fill="#fff" opacity="0.53"/><circle cx="632" cy="287" r="0.8" fill="#fff" opacity="0.80"/><circle cx="1188" cy="195" r="0.5" fill="#fff" opacity="0.80"/><circle cx="340" cy="260" r="0.8" fill="#fff" opacity="0.73"/><circle cx="693" cy="135" r="0.8" fill="#fff" opacity="0.31"/><circle cx="169" cy="196" r="0.5" fill="#fff" opacity="0.76"/>
</svg>
<div style="left:9px;top:1010px;width:1300px;height:18px;background:#c8cbdb;border-bottom:1px solid #b4b7c9"></div>
<div class="sbtn" style="left:9px;top:1010px;width:16px;height:17px;"></div>
<svg style="left:15px;top:1015px" width="4" height="7" viewBox="0 0 5 8"><path d="M4.500 0v8L.3 4z" fill="#5a5f7c"/></svg>
<div class="sbtn" style="left:40px;top:1010px;width:1270px;height:17px;"></div>
<svg style="left:692px;top:1016px" width="5" height="6" viewBox="0 0 5 6"><path d="M.5 0v6M2.500 0v6M4.500 0v6" stroke="#7a7f98" stroke-width=".8"/></svg>
<div style="left:9px;top:1027px;width:1300px;height:10px;background:#eceef4;border-top:1px solid #cfd2de"></div>
<div class="clip" style="left:9px;top:1028px;width:1213px;height:9px">
<span class="t ls" style="left:176.0px;top:2.0px;font-size:11px;line-height:15px;color:#333849;">03m 23s</span>
<span class="t ls" style="left:250.0px;top:2.0px;font-size:11px;line-height:15px;color:#333849;">Bin 2x2</span>
<span class="t ls" style="left:306.0px;top:2.0px;font-size:11px;line-height:15px;color:#333849;">-5.00C</span>
<span class="t ls" style="left:352.0px;top:2.0px;font-size:11px;line-height:15px;color:#333849;">Aff: 0.14% 0.4%</span>
<span class="t ls" style="left:430.0px;top:2.0px;font-size:11px;line-height:15px;color:#333849;">Filt:</span>
<span class="t ls" style="left:538.0px;top:2.0px;font-size:11px;line-height:15px;color:#333849;">Date: 1787.0s</span>
<span class="t ls" style="left:660.0px;top:2.0px;font-size:11px;line-height:15px;color:#333849;">4.34"/pix</span>
<span class="t ls" style="left:735.0px;top:2.0px;font-size:11px;line-height:15px;color:#333849;">RA: 20h15m03.023s</span>
<span class="t ls" style="left:855.0px;top:2.0px;font-size:11px;line-height:15px;color:#333849;">DEC: +25°35'44.91"</span>
<div style="left:172px;top:1px;width:1px;height:9px;background:#c3c6d4"></div>
<div style="left:246px;top:1px;width:1px;height:9px;background:#c3c6d4"></div>
<div style="left:302px;top:1px;width:1px;height:9px;background:#c3c6d4"></div>
<div style="left:348px;top:1px;width:1px;height:9px;background:#c3c6d4"></div>
<div style="left:426px;top:1px;width:1px;height:9px;background:#c3c6d4"></div>
<div style="left:534px;top:1px;width:1px;height:9px;background:#c3c6d4"></div>
<div style="left:656px;top:1px;width:1px;height:9px;background:#c3c6d4"></div>
<div style="left:731px;top:1px;width:1px;height:9px;background:#c3c6d4"></div>
<div style="left:850px;top:1px;width:1px;height:9px;background:#c3c6d4"></div>
<div style="left:940px;top:1px;width:1px;height:9px;background:#c3c6d4"></div>
</div>
<div style="left:707px;top:82px;width:260px;height:120px;background:linear-gradient(#5d6396 0,#42477e 1px,#3c4173 8px,#2e3366 10px,#2a2f5e 16px,#272d56 26px,#282e58 27px);background-color:#282e58;border-radius:4px 4px 0 0"></div>
<span class="t ls" style="left:712.5px;top:84.5px;font-size:12px;line-height:16px;color:#474d84;font-weight:700;letter-spacing:0.042px;">ARTEMIS CCD ATIK-460ex  -&gt;  -5.0°C  ...</span>
<svg style="left:948px;top:88px" width="10" height="10" viewBox="0 0 10 10"><path d="M1 1l8 8M9 1l-8 8" stroke="#c9cde6" stroke-width="2"/></svg>
<div style="left:712px;top:102px;width:250px;height:100px;background:#e8eaf2"></div>
<div style="left:712px;top:122px;width:250px;height:80px;background:linear-gradient(#eceef5,#f6f7fa 40px);border:1px solid #b4b8c8"></div>
<div style="left:713px;top:102px;width:145px;height:21px;background:linear-gradient(#f8f9fc,#eceef5);border:1px solid #b4b8c8;border-bottom:0;border-radius:4px 4px 0 0"></div>
<span class="t ls" style="left:720.0px;top:103.5px;font-size:12px;line-height:16px;color:#000;transform:scaleX(0.8943);transform-origin:0 50%;">ARTEMIS CCD ATIK-460ex</span>
<div style="left:717px;top:127px;width:240px;height:30px;border:1px solid #8a8ea6;border-radius:5px;background:linear-gradient(#fafbfd,#e4e6f0 60%,#d4d7e4)"></div>
<span class="t ls" style="left:823.0px;top:128.5px;font-size:12px;line-height:16px;color:#000;transform:scaleX(0.8932);transform-origin:0 50%;">STOP</span>
<div style="left:968px;top:82px;width:260px;height:120px;background:linear-gradient(#5d6396 0,#42477e 1px,#3c4173 8px,#2e3366 10px,#2a2f5e 16px,#272d56 26px,#282e58 27px);background-color:#282e58;border-radius:4px 4px 0 0"></div>
<span class="t ls" style="left:973.5px;top:84.5px;font-size:12px;line-height:16px;color:#474d84;font-weight:700;transform:scaleX(0.9552);transform-origin:0 50%;">ATIK HS</span>
<svg style="left:1209px;top:88px" width="10" height="10" viewBox="0 0 10 10"><path d="M1 1l8 8M9 1l-8 8" stroke="#c9cde6" stroke-width="2"/></svg>
<div style="left:973px;top:102px;width:250px;height:100px;background:#e8eaf2"></div>
<div style="left:973px;top:122px;width:250px;height:80px;background:linear-gradient(#eceef5,#f6f7fa 40px);border:1px solid #b4b8c8"></div>
<div style="left:974px;top:102px;width:55px;height:21px;background:linear-gradient(#f8f9fc,#eceef5);border:1px solid #b4b8c8;border-bottom:0;border-radius:4px 4px 0 0"></div>
<span class="t ls" style="left:981.0px;top:103.5px;font-size:12px;line-height:16px;color:#000;transform:scaleX(0.9062);transform-origin:0 50%;">ATIK HS</span>
<div style="left:1905px;top:80px;width:14px;height:973px;background:#c8cbdb"></div>
<div class="sbtn" style="left:1905px;top:80px;width:14px;height:16px;"></div>
<svg style="left:1908px;top:85px" width="8" height="5" viewBox="0 0 8 5"><path d="M0 4.500h8L4 .3z" fill="#5a5f7c"/></svg>
<div class="sbtn" style="left:1905px;top:97px;width:14px;height:970px;"></div>
<svg style="left:1909px;top:544px" width="6" height="5" viewBox="0 0 6 5"><path d="M0 .5h6M0 2.500h6M0 4.500h6" stroke="#7a7f98" stroke-width=".8"/></svg>
<div style="left:0px;top:1036px;width:1222px;height:17px;background:#c8cbdb;border-top:1px solid #b9bccb"></div>
<div class="sbtn" style="left:0px;top:1037px;width:15px;height:16px;"></div>
<svg style="left:5px;top:1041px" width="5" height="8" viewBox="0 0 5 8"><path d="M4.500 0v8L.3 4z" fill="#5a5f7c"/></svg>
<div class="sbtn" style="left:17px;top:1037px;width:1300px;height:16px;"></div>
<svg style="left:939px;top:1042px" width="5" height="6" viewBox="0 0 5 6"><path d="M.5 0v6M2.500 0v6M4.500 0v6" stroke="#7a7f98" stroke-width=".8"/></svg>
<div style="left:0px;top:1053px;width:1919px;height:26px;background:linear-gradient(#d6d8e4 0,#eff0f6 3px,#e9ebf2 12px,#dfe1eb 24px,#50546c 25px,#50546c 26px)"></div>
<div style="left:398px;top:1056px;width:1px;height:20px;background:#b9bccb"></div>
<div style="left:399px;top:1056px;width:1px;height:20px;background:#fafbfd"></div>
<div style="left:797px;top:1056px;width:1px;height:20px;background:#b9bccb"></div>
<div style="left:798px;top:1056px;width:1px;height:20px;background:#fafbfd"></div>
<span class="t ls" style="left:41.0px;top:1056.0px;font-size:12px;line-height:16px;color:#10121c;transform:scaleX(0.9325);transform-origin:0 50%;">X=298 Y=607 | 406.0 ADU</span>
<span class="t ls" style="left:182.5px;top:1056.0px;font-size:12px;line-height:16px;color:#10121c;transform:scaleX(0.9548);transform-origin:0 50%;">Moy. : Med.[3x3]= 422.11 : 421.00</span>
<span class="t ls" style="left:402.0px;top:1056.0px;font-size:12px;line-height:16px;color:#10121c;transform:scaleX(0.9753);transform-origin:0 50%;">Niv. gris= 1</span>
<span class="t ls" style="left:805.0px;top:1056.0px;font-size:12px;line-height:16px;color:#10121c;transform:scaleX(0.9468);transform-origin:0 50%;">Format 1374x1099x1 [Réels 32bits]  Zoom = 1</span>
<svg style="left:1901px;top:1063px" width="11" height="10" viewBox="0 0 11 10"><path d="M10 0v9.500H.5z" fill="#5a6290"/></svg>
<div style="left:1231px;top:85px;width:674px;height:509px;background:linear-gradient(#5d6396 0,#42477e 1px,#3c4173 8px,#2e3366 10px,#2a2f5e 16px,#272d56 26px,#282e58 27px);background-color:#282e58;border-radius:5px 5px 0 0"></div>
<svg style="left:1237px;top:91px" width="16" height="14" viewBox="0 0 16 14"><path d="M2.200 12.800L8 2.200l5.800 10.600z" fill="none" stroke="#1a2a7a" stroke-width="2.600" stroke-linejoin="round"/><path d="M2.600 11.500L8 2.200" stroke="#38c838" stroke-width="2.200" stroke-linecap="round"/><path d="M13.400 11.500L8 2.200" stroke="#38c838" stroke-width="2.200" stroke-linecap="round"/><path d="M5.600 5.800L8 2.200l2.400 3.600" fill="none" stroke="#e83020" stroke-width="2.200" stroke-linecap="round" stroke-linejoin="round"/><path d="M4.400 8.200l.9-1.600M11.600 8.200l-.9-1.600" stroke="#f0e030" stroke-width="2.200"/><path d="M2.400 12.600h11.200" stroke="#182878" stroke-width="2.200" stroke-linecap="round"/></svg>
<span class="t ls" style="left:1257.0px;top:90.0px;font-size:12px;line-height:16px;color:#474d84;font-weight:700;letter-spacing:0.084px;">Le ciel EQ.2000, Zoom=512, Alpha= 20h15m13s Delta= +25°35'29''    28/07/2016 20:36:24 TU [Window1.m...</span>
<svg style="left:1874px;top:91px" width="32" height="14" viewBox="0 0 32 14"><rect x="1" y="10" width="7" height="2" fill="#4b5189"/><path d="M21 2l9 9M30 2l-9 9" stroke="#4b5189" stroke-width="2.200"/></svg>
<div style="left:1238px;top:111px;width:666px;height:41px;background:linear-gradient(#f2f3f8,#e4e6ef)"></div>
<div style="left:1241px;top:112px;width:38px;height:38px;background:linear-gradient(#f8f8fb,#eceef4);border-right:1px solid #d8dae6;border-radius:3px"></div>
<svg style="left:1244px;top:113px" width="32" height="32" viewBox="0 0 32 32"><path d="M18 18l10 11" stroke="url(#gHandle)" stroke-width="4.2" stroke-linecap="round"/><circle cx="12" cy="12" r="9.5" fill="url(#gGlass)" stroke="#8a7a6c" stroke-width="1.6"/><rect x="6.5" y="10.6" width="11" height="2.8" fill="#f06a10"/></svg>
<div style="left:1279px;top:112px;width:38px;height:38px;background:linear-gradient(#f8f8fb,#eceef4);border-right:1px solid #d8dae6;border-radius:3px"></div>
<svg style="left:1282px;top:113px" width="32" height="32" viewBox="0 0 32 32"><path d="M18 18l10 11" stroke="url(#gHandle)" stroke-width="4.2" stroke-linecap="round"/><circle cx="12" cy="12" r="9.5" fill="url(#gGlass)" stroke="#8a7a6c" stroke-width="1.6"/><rect x="6.5" y="10.6" width="11" height="2.8" fill="#f06a10"/><rect x="10.6" y="6.5" width="2.8" height="11" fill="#f06a10"/></svg>
<div style="left:1318px;top:112px;width:38px;height:38px;background:linear-gradient(#f8f8fb,#eceef4);border-right:1px solid #d8dae6;border-radius:3px"></div>
<svg style="left:1321px;top:113px" width="32" height="32" viewBox="0 0 32 32"><g transform="translate(11 8)"><circle r="6.800" fill="#f58a34"/><g stroke="#e06a10" stroke-width="1.100"><path d="M0 0L7.2 0.0"/><path d="M0 0L6.2 3.6"/><path d="M0 0L3.6 6.2"/><path d="M0 0L-0.0 7.2"/><path d="M0 0L-3.6 6.2"/><path d="M0 0L-6.2 3.6"/><path d="M0 0L-7.2 -0.0"/><path d="M0 0L-6.2 -3.6"/><path d="M0 0L-3.6 -6.2"/><path d="M0 0L0.0 -7.2"/><path d="M0 0L3.6 -6.2"/><path d="M0 0L6.2 -3.6"/></g><circle r="2" fill="#ffd0a0"/></g><ellipse cx="17.500" cy="22" rx="14" ry="9" fill="#b4b4b4"/><ellipse cx="17.500" cy="20.500" rx="14" ry="8.500" fill="url(#gGear)"/><g stroke="#8a8a8a" stroke-width=".9"><path d="M23.5 20.0L31.5 20.5"/><path d="M23.3 20.9L31.0 22.7"/><path d="M22.7 21.7L29.6 24.8"/><path d="M21.7 22.4L27.4 26.5"/><path d="M20.5 22.9L24.5 27.9"/><path d="M19.1 23.3L21.1 28.7"/><path d="M17.5 23.4L17.5 29.0"/><path d="M15.9 23.3L13.9 28.7"/><path d="M14.5 22.9L10.5 27.9"/><path d="M13.3 22.4L7.6 26.5"/><path d="M12.3 21.7L5.4 24.7"/><path d="M11.7 20.9L4.0 22.7"/><path d="M11.5 20.0L3.5 20.5"/><path d="M11.7 19.1L4.0 18.3"/><path d="M12.3 18.3L5.4 16.2"/><path d="M13.3 17.6L7.6 14.5"/><path d="M14.5 17.1L10.5 13.1"/><path d="M15.9 16.7L13.9 12.3"/><path d="M17.5 16.6L17.5 12.0"/><path d="M19.1 16.7L21.1 12.3"/><path d="M20.5 17.1L24.5 13.1"/><path d="M21.7 17.6L27.4 14.5"/><path d="M22.7 18.3L29.6 16.3"/><path d="M23.3 19.1L31.0 18.3"/></g><ellipse cx="17.500" cy="19.500" rx="6" ry="3.200" fill="#f2f2f2" stroke="#aaa" stroke-width=".5"/><ellipse cx="17.500" cy="19" rx="2.200" ry="1.200" fill="#555"/></svg>
<div style="left:1357px;top:112px;width:38px;height:38px;background:linear-gradient(#f8f8fb,#eceef4);border-right:1px solid #d8dae6;border-radius:3px"></div>
<svg style="left:1360px;top:113px" width="32" height="32" viewBox="0 0 32 32"><circle cx="16" cy="16" r="14.500" fill="url(#gSph)" stroke="#555" stroke-width=".6"/><path d="M1.800 18a14.500 14.500 0 0 0 28.400 0c-6 4-22 4-28.400 0z" fill="#6e6e6e" opacity=".75"/><circle cx="16.5" cy="20.8" r=".55" fill="#444"/><circle cx="10.8" cy="19.7" r=".55" fill="#444"/><circle cx="15.4" cy="14.5" r=".55" fill="#444"/><circle cx="26.4" cy="15.7" r=".55" fill="#444"/><circle cx="15.8" cy="17.5" r=".55" fill="#444"/><circle cx="21.9" cy="14.9" r=".55" fill="#444"/><circle cx="19.1" cy="10.7" r=".55" fill="#444"/><circle cx="14.8" cy="13.8" r=".55" fill="#444"/><circle cx="8.8" cy="8.1" r=".55" fill="#444"/><circle cx="6.8" cy="13.9" r=".55" fill="#444"/><circle cx="15.6" cy="14.4" r=".55" fill="#444"/><circle cx="16.4" cy="8.7" r=".55" fill="#444"/><circle cx="15.9" cy="15.3" r=".55" fill="#444"/><circle cx="19.9" cy="11.2" r=".55" fill="#444"/><circle cx="13.9" cy="5.8" r=".55" fill="#444"/><circle cx="13.4" cy="5.5" r=".55" fill="#444"/><circle cx="8.1" cy="20.2" r=".55" fill="#444"/><circle cx="5.0" cy="18.4" r=".55" fill="#444"/><circle cx="16.9" cy="14.3" r=".55" fill="#444"/><circle cx="17.8" cy="16.7" r=".55" fill="#444"/><circle cx="21.3" cy="14.0" r=".55" fill="#444"/><circle cx="13.4" cy="12.7" r=".55" fill="#444"/><circle cx="11.2" cy="14.8" r=".55" fill="#444"/><circle cx="11.7" cy="20.0" r=".55" fill="#444"/><circle cx="6.2" cy="10.1" r=".55" fill="#444"/><circle cx="11.2" cy="6.0" r=".55" fill="#444"/><circle cx="23.7" cy="6.7" r=".55" fill="#444"/><circle cx="15.0" cy="13.5" r=".55" fill="#444"/><circle cx="23.7" cy="7.1" r=".55" fill="#444"/><circle cx="21.9" cy="11.6" r=".55" fill="#444"/><circle cx="15.4" cy="12.8" r=".55" fill="#444"/><circle cx="19.5" cy="9.7" r=".55" fill="#444"/><circle cx="15.8" cy="15.7" r=".55" fill="#444"/><circle cx="23.5" cy="6.6" r=".55" fill="#444"/><circle cx="24.5" cy="19.5" r=".55" fill="#444"/><circle cx="14.4" cy="15.9" r=".55" fill="#444"/><circle cx="13.4" cy="22.9" r=".55" fill="#444"/><circle cx="16.4" cy="14.7" r=".55" fill="#444"/></svg>
<div style="left:1395px;top:112px;width:38px;height:38px;background:linear-gradient(#f8f8fb,#eceef4);border-right:1px solid #d8dae6;border-radius:3px"></div>
<svg style="left:1398px;top:113px" width="32" height="32" viewBox="0 0 32 32"><path d="M3 9l7-5 4 3-1 17-7 5-4-5z" fill="#2c2c30"/><path d="M14 7l6-3 9 12-2 7-8 1z" fill="#38383c"/><path d="M9 5l5-2.500 6 2-4 5z" fill="#5a5c62"/><path d="M4 10l5-4 2 14-6 4z" fill="#7a7e86" opacity=".7"/><path d="M17 7l4-1 6 10-5 2z" fill="#8a8e96" opacity=".55"/><ellipse cx="6.500" cy="25" rx="5" ry="4" transform="rotate(-25 6.500 25)" fill="#f0a08c" stroke="#2a2a2e" stroke-width="1.200"/><ellipse cx="25" cy="20" rx="4.600" ry="3.800" transform="rotate(25 25 20)" fill="#f0a08c" stroke="#2a2a2e" stroke-width="1.200"/><ellipse cx="6" cy="24.500" rx="2.400" ry="1.600" transform="rotate(-25 6 24.500)" fill="#fbd0c4"/><ellipse cx="24.600" cy="19.500" rx="2.200" ry="1.500" transform="rotate(25 24.600 19.500)" fill="#fbd0c4"/></svg>
<div style="left:1435px;top:112px;width:38px;height:38px;background:linear-gradient(#f8f8fb,#eceef4);border-right:1px solid #d8dae6;border-radius:3px"></div>
<svg style="left:1438px;top:113px" width="32" height="32" viewBox="0 0 32 32"><circle cx="16" cy="16" r="15.200" fill="url(#gCop)" stroke="#4a1c06" stroke-width="1.200"/><circle cx="16" cy="16" r="12.500" fill="#f0c8a0" opacity=".55"/><path d="M9 27c1-9 3.500-14 7-14s6 5 7 14" fill="#c8d0c8" opacity=".55"/><circle cx="16" cy="9.500" r="3.400" fill="#e8f0f0" opacity=".8"/><path d="M6 5.500l20.500 21.500M26.500 5.500L6 27" stroke="#e81828" stroke-width="2.800"/></svg>
<div style="left:1474px;top:112px;width:38px;height:38px;background:linear-gradient(#f8f8fb,#eceef4);border-right:1px solid #d8dae6;border-radius:3px"></div>
<svg style="left:1477px;top:113px" width="32" height="32" viewBox="0 0 32 32"><rect x="8.500" y="1.500" width="16" height="12" fill="#fff" stroke="#b8bcc4" stroke-width=".8"/><path d="M3 13h27l1.500 3v8h-30v-8z" fill="#e4e6ea" stroke="#b0b4bc" stroke-width=".7"/><path d="M4.500 13.200h24l1 2.800h-26z" fill="#c84c14"/><path d="M6 22h21v9H6z" fill="#f2f3f5" stroke="#b0b4bc" stroke-width=".7"/><path d="M7 23v7M26 23v7" stroke="#555" stroke-width="1.200"/><rect x="6" y="21" width="21" height="1.600" fill="#9a9ea6"/></svg>
<div style="left:1514px;top:112px;width:38px;height:38px;background:linear-gradient(#f8f8fb,#eceef4);border-right:1px solid #d8dae6;border-radius:3px"></div>
<svg style="left:1517px;top:113px" width="32" height="32" viewBox="0 0 32 32"><path d="M12.500 3c.8 10 2.200 11.400 12.500 12.500-10.300 1.100-11.700 2.500-12.500 14.500-.8-12-2.200-13.400-12.500-14.500C10.300 14.400 11.700 13 12.500 3z" fill="#060606"/><path d="M32 0l-1.500 10-2.800-2.800-5.500 5.500-2.900-2.900 5.500-5.500L22 1.500z" fill="#f04a14"/><path d="M0 32l1.500-9.500 2.700 2.700 4.500-4.500 2.900 2.900-4.500 4.500 2.700 2.700z" fill="#f04a14"/></svg>
<div style="left:1552px;top:112px;width:38px;height:38px;background:linear-gradient(#f8f8fb,#eceef4);border-right:1px solid #d8dae6;border-radius:3px"></div>
<svg style="left:1555px;top:113px" width="32" height="32" viewBox="0 0 32 32"><path d="M22 3L31.500 12 20.300 12.400 17.800 8.250z" fill="#f6efe8" fill-opacity=".6" stroke="#9a4a20" stroke-width="1.300" stroke-linejoin="round"/><path d="M6 13.700C6.300 9.500 9 5.500 14.500 3.700L22 3 17.800 8.250C16 9.300 15.200 11.500 14.500 14.900L19.100 16.600 8.250 28.700 1.200 16z" fill="url(#gUndo)" stroke="#b85408" stroke-width=".5" stroke-linejoin="round"/></svg>
<div style="left:1591px;top:112px;width:38px;height:38px;background:linear-gradient(#f8f8fb,#eceef4);border-right:1px solid #d8dae6;border-radius:3px"></div>
<svg style="left:1594px;top:113px" width="32" height="32" viewBox="0 0 32 32"><g transform="rotate(0 16 16)" fill="#060606"><path d="M15.200 15.200V2.500L2.500 15.200z"/><path d="M.3 4L4 .3l9.500 9.500-3.700 3.700z"/></g><g transform="rotate(90 16 16)" fill="#060606"><path d="M15.200 15.200V2.500L2.500 15.200z"/><path d="M.3 4L4 .3l9.500 9.500-3.700 3.700z"/></g><g transform="rotate(180 16 16)" fill="#060606"><path d="M15.200 15.200V2.500L2.500 15.200z"/><path d="M.3 4L4 .3l9.500 9.500-3.700 3.700z"/></g><g transform="rotate(270 16 16)" fill="#060606"><path d="M15.200 15.200V2.500L2.500 15.200z"/><path d="M.3 4L4 .3l9.500 9.500-3.700 3.700z"/></g></svg>
<div style="left:1630px;top:112px;width:38px;height:38px;background:linear-gradient(#f8f8fb,#eceef4);border-right:1px solid #d8dae6;border-radius:3px"></div>
<svg style="left:1633px;top:113px" width="32" height="32" viewBox="0 0 32 32"><g transform="rotate(180 16 15.850)"><path d="M22 3L31.500 12 20.300 12.400 17.800 8.250z" fill="#f6efe8" fill-opacity=".6" stroke="#9a4a20" stroke-width="1.300" stroke-linejoin="round"/><path d="M6 13.700C6.300 9.500 9 5.500 14.500 3.700L22 3 17.800 8.250C16 9.300 15.200 11.500 14.500 14.900L19.100 16.600 8.250 28.700 1.200 16z" fill="url(#gUndo)" stroke="#b85408" stroke-width=".5" stroke-linejoin="round"/></g></svg>
<div style="left:1668px;top:112px;width:38px;height:38px;background:linear-gradient(#f8f8fb,#eceef4);border-right:1px solid #d8dae6;border-radius:3px"></div>
<svg style="left:1671px;top:113px" width="32" height="32" viewBox="0 0 32 32"><rect x="1" y="10" width="6" height="12" fill="#f07818" stroke="#111" stroke-width="1.800"/><path d="M11 10h8V3l12 13-12 13v-7h-8z" fill="url(#gYel)" stroke="#111" stroke-width="2"/></svg>
<div style="left:1707px;top:112px;width:38px;height:38px;background:linear-gradient(#f8f8fb,#eceef4);border-right:1px solid #d8dae6;border-radius:3px"></div>
<svg style="left:1710px;top:113px" width="32" height="32" viewBox="0 0 32 32"><rect x="1" y="1" width="30" height="30" rx="3" fill="#fbd8c0" stroke="#f08a50" stroke-width="1.400"/><path d="M2 9h28V4a2 2 0 0 0-2-2H4a2 2 0 0 0-2 2z" fill="#f07a28"/><rect x="2" y="9" width="8" height="21" fill="#f8b088"/><path d="M10 9v21M17 9v21M24 9v21M2 16h28M2 23h28" stroke="#f08a50" stroke-width="1.200"/><rect x="10.600" y="9.600" width="19" height="20" fill="#fff" opacity=".55"/><path d="M11 3v5M18 3v5M25 3v5" stroke="#fbd0b0" stroke-width="1"/></svg>
<div style="left:1747px;top:112px;width:38px;height:38px;background:linear-gradient(#f8f8fb,#eceef4);border-right:1px solid #d8dae6;border-radius:3px"></div>
<svg style="left:1750px;top:113px" width="32" height="32" viewBox="0 0 32 32"><path d="M1 8c12-4 22-3 30 2" stroke="#222" stroke-width="1.600" fill="none"/><path d="M2 27c12 1 20 0 28-2" stroke="#222" stroke-width="1.600" fill="none"/><path d="M8 20c8 3 16 2 22-3" stroke="#b8a898" stroke-width="1.400" fill="none"/><ellipse cx="22" cy="14" rx="9" ry="3" fill="none" stroke="#d8a070" stroke-width="1.600"/><circle cx="7" cy="17" r="6" fill="#f8f8f4" stroke="#d8d8d0" stroke-width=".6"/><circle cx="13" cy="5" r="2.800" fill="#e85820"/><circle cx="15" cy="18" r="2.600" fill="#204890"/><circle cx="28" cy="27" r="3.400" fill="#a070a8"/></svg>
<div style="left:1785px;top:112px;width:38px;height:38px;background:linear-gradient(#f8f8fb,#eceef4);border-right:1px solid #d8dae6;border-radius:3px"></div>
<svg style="left:1788px;top:113px" width="32" height="32" viewBox="0 0 32 32"><g transform="rotate(0 16 16)" fill="#f06418"><path d="M15.200 15.200V2.500L2.500 15.200z"/><path d="M.3 4L4 .3l9.500 9.500-3.700 3.700z"/></g><g transform="rotate(90 16 16)" fill="#060606"><path d="M15.200 15.200V2.500L2.500 15.200z"/><path d="M.3 4L4 .3l9.500 9.500-3.700 3.700z"/></g><g transform="rotate(180 16 16)" fill="#060606"><path d="M15.200 15.200V2.500L2.500 15.200z"/><path d="M.3 4L4 .3l9.500 9.500-3.700 3.700z"/></g><g transform="rotate(270 16 16)" fill="#060606"><path d="M15.200 15.200V2.500L2.500 15.200z"/><path d="M.3 4L4 .3l9.500 9.500-3.700 3.700z"/></g></svg>
<div style="left:1825px;top:112px;width:38px;height:38px;background:linear-gradient(#f8f8fb,#eceef4);border-right:1px solid #d8dae6;border-radius:3px"></div>
<svg style="left:1828px;top:113px" width="32" height="32" viewBox="0 0 32 32"><path d="M1 18c6-2 10-6 12-14M4 26c8-3 14-10 17-20M10 31c8-5 14-12 18-22" stroke="#f0a070" stroke-width=".7" fill="none" stroke-dasharray="1.200 1"/><text x="20" y="14" font-family="Liberation Sans,sans-serif" font-weight="700" font-size="16" fill="#f06418" text-anchor="middle" textLength="21">EQ</text><text x="12" y="31" font-family="Liberation Sans,sans-serif" font-weight="700" font-size="16" fill="#f06418" text-anchor="middle" textLength="21">AZ</text><path d="M1 1l30 30" stroke="#080808" stroke-width="1.500"/></svg>
<svg style="left:1238px;top:152px" width="667" height="407" viewBox="0 0 667 407">
<defs><radialGradient id="stg3"><stop offset="0" stop-color="#fff"/><stop offset=".62" stop-color="#fff"/><stop offset=".8" stop-color="#ccc" stop-opacity=".6"/><stop offset="1" stop-color="#888" stop-opacity="0"/></radialGradient><radialGradient id="stg"><stop offset="0" stop-color="#fff" stop-opacity=".95"/><stop offset=".3" stop-color="#ddd" stop-opacity=".8"/><stop offset=".65" stop-color="#aaa" stop-opacity=".32"/><stop offset="1" stop-color="#888" stop-opacity="0"/></radialGradient></defs><rect width="667" height="407" fill="#000"/>
<circle cx="372.8" cy="78.4" r="4.4" fill="url(#stg)"/><circle cx="312.0" cy="109.0" r="4.2" fill="url(#stg)"/><circle cx="327.0" cy="136.0" r="4.4" fill="url(#stg)"/><circle cx="330.0" cy="182.0" r="4.0" fill="url(#stg)"/><circle cx="474.0" cy="98.0" r="4.8" fill="url(#stg)"/><circle cx="508.0" cy="106.0" r="4.2" fill="url(#stg)"/><circle cx="519.0" cy="214.0" r="4.8" fill="url(#stg)"/><circle cx="303.0" cy="257.0" r="4.0" fill="url(#stg)"/><circle cx="572.0" cy="296.0" r="4.0" fill="url(#stg)"/><circle cx="620.0" cy="284.0" r="4.0" fill="url(#stg)"/><circle cx="533.5" cy="344.0" r="4.2" fill="url(#stg)"/><circle cx="482.0" cy="356.0" r="4.0" fill="url(#stg)"/><circle cx="514.0" cy="356.0" r="3.8" fill="url(#stg)"/><circle cx="629.4" cy="17.0" r="4.0" fill="url(#stg)"/><circle cx="630.0" cy="72.4" r="4.6" fill="url(#stg)"/><circle cx="289.7" cy="54.0" r="3.6" fill="url(#stg)"/>
<circle cx="333" cy="204" r="174" fill="none" stroke="#fff" stroke-width="1.300" stroke-dasharray="3.500 3"/>
<path d="M349.400 31.500L505 168L320.800 376.700L165 235z" fill="none" stroke="#f4f4f4" stroke-width="1.200"/>
<circle cx="505" cy="168" r="4.500" fill="#fff"/><circle cx="320.800" cy="376.700" r="4.500" fill="#fff"/><circle cx="412.500" cy="272.700" r="4.500" fill="#fff"/>
<rect x="516.500" y="162" width="77" height="16" fill="#000" stroke="#fff" stroke-width="1.200"/>
<text x="519" y="174.500" font-family="Liberation Sans,sans-serif" font-size="11" fill="#fff" textLength="72">(1,1) ATIK Titan</text>
<rect x="420.500" y="281" width="24.500" height="16" fill="#000" stroke="#fff" stroke-width="1.200"/>
<text x="423" y="293.500" font-family="Liberation Sans,sans-serif" font-size="11" fill="#fff" textLength="20">000°</text>
<rect x="255" y="371" width="54.500" height="15.500" fill="#000" stroke="#fff" stroke-width="1.200"/>
<text x="258" y="383" font-family="Liberation Sans,sans-serif" font-size="11" fill="#ddd" textLength="48">(Nmax,1)</text>
<circle cx="320.500" cy="218" r="15" fill="url(#stg3)"/>
<rect x="314.500" y="212.500" width="9" height="9" fill="none" stroke="#e8d028" stroke-width="1"/><circle cx="320" cy="217.500" r="2" fill="none" stroke="#18a8e8" stroke-width="1"/>
<path d="M332 201l6 6M338 201l-6 6" stroke="#ddd" stroke-width=".9"/>
<text x="325" y="230.500" font-family="Liberation Sans,sans-serif" font-size="8" fill="#18b8d8" textLength="36">1 QR Vul</text>
<g fill="none" stroke="#f0e020" stroke-width="1.300"><circle cx="346" cy="285" r="13.500" stroke-width="2"/><circle cx="346" cy="285" r="8.500"/><circle cx="346" cy="285" r="5.500"/><path d="M346 266v8M346 296v8M327 285h8M357 285h8M346 279.500v11M340.500 285h11"/></g>
<text x="633" y="11" font-family="Liberation Sans,sans-serif" font-size="8" fill="#5a6ad8">N</text><path d="M641 14l24 19M660 26l5 7-7-3" stroke="#3a48b8" stroke-width=".9" fill="none"/>
</svg>
<div style="left:1238px;top:558px;width:666px;height:28px;background:linear-gradient(#f2f3f8,#e6e8f0)"></div>
<div style="left:1539px;top:564px;width:38px;height:19px;background:#fff;border:1px solid #aeb2c4"></div>
<span class="t ls" style="left:1542.0px;top:564.5px;font-size:12px;line-height:16px;color:#000;">Az</span>
<div style="left:1562px;top:565px;width:14px;height:17px;background:linear-gradient(#eef0f6,#d6d9e6);border-left:1px solid #c0c4d4"></div>
<svg style="left:1565px;top:568px" width="8" height="11" viewBox="0 0 8 11"><path d="M4 .5L7.300 4.200H.7zM4 10.500L7.300 6.800H.7z" fill="#4a5070"/></svg>
<div style="left:1580px;top:562px;width:86px;height:22px;border:1px solid #c9ccd9;border-right-color:#f8f9fc;border-bottom-color:#f8f9fc;background:#e9ebf2"></div>
<div style="left:1670px;top:562px;width:41px;height:22px;border:1px solid #c9ccd9;border-right-color:#f8f9fc;border-bottom-color:#f8f9fc;background:#e9ebf2"></div>
<div style="left:1716px;top:562px;width:183px;height:22px;border:1px solid #c9ccd9;border-right-color:#f8f9fc;border-bottom-color:#f8f9fc;background:#e9ebf2"></div>
<span class="t ls" style="left:1584.7px;top:564.0px;font-size:12px;line-height:16px;color:#4a5068;transform:scaleX(0.8683);transform-origin:0 50%;">Objets: 69</span>
<span class="t ls" style="left:1680.0px;top:564.0px;font-size:12px;line-height:16px;color:#4a5068;transform:scaleX(0.9168);transform-origin:0 50%;">Vul</span>
<span class="t ls" style="left:1723.0px;top:564.0px;font-size:12px;line-height:16px;color:#4a5068;transform:scaleX(0.8774);transform-origin:0 50%;">Champ=22 ' x 24 '</span>
<div style="left:1222px;top:726px;width:529px;height:328px;background:linear-gradient(#5d6396 0,#42477e 1px,#3c4173 8px,#2e3366 10px,#2a2f5e 16px,#272d56 26px,#282e58 27px);background-color:#282e58"></div>
<svg style="left:1732px;top:732px" width="10" height="10" viewBox="0 0 10 10"><path d="M1 1l8 8M9 1l-8 8" stroke="#c9cde6" stroke-width="2"/></svg>
<div style="left:1227px;top:747px;width:519px;height:303px;background:#e9ebf2"></div>
<svg style="left:1229px;top:752px" width="226" height="245" viewBox="0 0 226 245">
<defs><radialGradient id="dg" cx="50%" cy="50%" r="50%"><stop offset="0" stop-color="#fdfdfd"/><stop offset=".45" stop-color="#e9e9e9"/><stop offset=".8" stop-color="#bdbdbd"/><stop offset="1" stop-color="#a2a2a2"/></radialGradient></defs>
<rect width="226" height="245" fill="#4e1402"/>
<circle cx="113" cy="132" r="111" fill="url(#dg)" stroke="#000" stroke-width="1.200"/>
<clipPath id="dcl"><circle cx="113" cy="132" r="111"/></clipPath><g clip-path="url(#dcl)"><g transform="rotate(45 113 132)"><path d="M113 99.500h121v65H113a32.500 32.500 0 0 1 0-65z" fill="#000"/></g></g>
<circle cx="113" cy="132" r="111" fill="none" stroke="#000" stroke-width="1.200"/>
<path d="M113 132L196 209" stroke="#18b8c8" stroke-width=".9"/>
<ellipse cx="162.700" cy="178.500" rx="17" ry="19.500" transform="rotate(35 162.700 178.500)" fill="#18a8ff"/>
<path d="M0 0h226v245H0z" fill="none"/>
<g font-family="Liberation Sans,sans-serif" font-size="8.500" text-anchor="middle" fill="#000">
<rect x="107" y="21" width="12" height="10" fill="#fff" stroke="#000" stroke-width=".8"/><text x="113" y="29">N</text>
<rect x="2" y="126.500" width="12" height="10.500" fill="#fff" stroke="#000" stroke-width=".8"/><text x="8" y="135">O</text>
<rect x="211.500" y="126.500" width="12" height="10.500" fill="#fff" stroke="#000" stroke-width=".8"/><text x="217.500" y="135">E</text>
<rect x="107" y="231" width="12" height="10.500" fill="#fff" stroke="#000" stroke-width=".8"/><text x="113" y="239.500">S</text>
</g></svg>
<div style="left:1461px;top:757.5px;width:135px;height:16px;background:#e9ebf2;border:1px solid #c3c6d4;border-right-color:#fafbfd;border-bottom-color:#fafbfd"></div>
<span class="t ls" style="left:1465.7px;top:757.0px;font-size:12px;line-height:16px;color:#4a5068;transform:scaleX(0.8942);transform-origin:0 50%;">Position courante / Dome</span>
<div style="left:1602px;top:757.5px;width:55px;height:16px;background:#e9ebf2;border:1px solid #c3c6d4;border-right-color:#fafbfd;border-bottom-color:#fafbfd"></div>
<span class="t ls" style="left:1615.0px;top:757.0px;font-size:12px;line-height:16px;color:#4a5068;">132.1</span>
<div style="left:1658px;top:757.5px;width:7px;height:16px;background:#e9ebf2;border:1px solid #c3c6d4;border-right-color:#fafbfd;border-bottom-color:#fafbfd"></div>
<span class="t ls" style="left:1659.5px;top:756.0px;font-size:10px;line-height:14px;color:#4a5068;">°</span>
<div style="left:1461px;top:777.5px;width:135px;height:16px;background:#e9ebf2;border:1px solid #c3c6d4;border-right-color:#fafbfd;border-bottom-color:#fafbfd"></div>
<span class="t ls" style="left:1465.7px;top:777.0px;font-size:12px;line-height:16px;color:#4a5068;transform:scaleX(0.9082);transform-origin:0 50%;">Position courante / Telesc</span>
<div style="left:1602px;top:777.5px;width:55px;height:16px;background:#e9ebf2;border:1px solid #c3c6d4;border-right-color:#fafbfd;border-bottom-color:#fafbfd"></div>
<span class="t ls" style="left:1615.0px;top:777.0px;font-size:12px;line-height:16px;color:#4a5068;">133.2</span>
<div style="left:1658px;top:777.5px;width:7px;height:16px;background:#e9ebf2;border:1px solid #c3c6d4;border-right-color:#fafbfd;border-bottom-color:#fafbfd"></div>
<span class="t ls" style="left:1659.5px;top:776.0px;font-size:10px;line-height:14px;color:#4a5068;">°</span>
<div style="left:1461px;top:795.5px;width:135px;height:16px;background:#e9ebf2;border:1px solid #c3c6d4;border-right-color:#fafbfd;border-bottom-color:#fafbfd"></div>
<span class="t ls" style="left:1465.7px;top:795.0px;font-size:12px;line-height:16px;color:#4a5068;transform:scaleX(0.8698);transform-origin:0 50%;">Diff d'Azimut géometrique</span>
<div style="left:1602px;top:795.5px;width:55px;height:16px;background:#e9ebf2;border:1px solid #c3c6d4;border-right-color:#fafbfd;border-bottom-color:#fafbfd"></div>
<span class="t ls" style="left:1621.7px;top:795.0px;font-size:12px;line-height:16px;color:#4a5068;">1.1</span>
<div style="left:1658px;top:795.5px;width:7px;height:16px;background:#e9ebf2;border:1px solid #c3c6d4;border-right-color:#fafbfd;border-bottom-color:#fafbfd"></div>
<span class="t ls" style="left:1659.5px;top:794.0px;font-size:10px;line-height:14px;color:#4a5068;">°</span>
<div style="left:1461px;top:813.5px;width:135px;height:16px;background:#e9ebf2;border:1px solid #c3c6d4;border-right-color:#fafbfd;border-bottom-color:#fafbfd"></div>
<span class="t ls" style="left:1465.7px;top:813.0px;font-size:12px;line-height:16px;color:#4a5068;transform:scaleX(0.8775);transform-origin:0 50%;">Azimut Télescope</span>
<div style="left:1602px;top:813.5px;width:55px;height:16px;background:#e9ebf2;border:1px solid #c3c6d4;border-right-color:#fafbfd;border-bottom-color:#fafbfd"></div>
<span class="t ls" style="left:1615.0px;top:813.0px;font-size:12px;line-height:16px;color:#4a5068;">109.0</span>
<div style="left:1658px;top:813.5px;width:7px;height:16px;background:#e9ebf2;border:1px solid #c3c6d4;border-right-color:#fafbfd;border-bottom-color:#fafbfd"></div>
<span class="t ls" style="left:1659.5px;top:812.0px;font-size:10px;line-height:14px;color:#4a5068;">°</span>
<div style="left:1462px;top:836.5px;width:134px;height:16px;background:#e9ebf2;border:1px solid #c3c6d4;border-right-color:#fafbfd;border-bottom-color:#fafbfd"></div>
<span class="t ls" style="left:1466.4px;top:835.8px;font-size:12px;line-height:16px;color:#4a5068;transform:scaleX(0.8803);transform-origin:0 50%;">Nelle Position (/Abs. dome)</span>
<div style="left:1602px;top:837px;width:53px;height:19px;background:#fff;border:1px solid #aeb2c4"></div>
<span class="t ls" style="left:1604.4px;top:838.5px;font-size:12px;line-height:16px;color:#000;">0</span>
<div style="left:1658px;top:836.5px;width:7px;height:19px;background:#e9ebf2;border:1px solid #c3c6d4;border-right-color:#fafbfd;border-bottom-color:#fafbfd"></div>
<span class="t ls" style="left:1659.5px;top:835.0px;font-size:10px;line-height:14px;color:#4a5068;">°</span>
<div class="pbtn" style="left:1724px;top:753px;width:21px;height:23px;"></div>
<svg style="left:1726px;top:755px" width="17" height="19" viewBox="0 0 18 20"><path d="M6 1h6v7h4l-7 8-7-8h4z" fill="#e81818"/><rect x="1" y="17" width="16" height="2.600" fill="#e81818"/></svg>
<div class="pbtn" style="left:1672px;top:790px;width:70px;height:17px;"></div>
<span class="t ls" style="left:1680.5px;top:790.5px;font-size:12px;line-height:16px;color:#000;transform:scaleX(0.9240);transform-origin:0 50%;">Init / Reset</span>
<div class="pbtn" style="left:1672px;top:813px;width:70px;height:17px;"></div>
<span class="t ls" style="left:1675.0px;top:813.5px;font-size:12px;line-height:16px;color:#000;transform:scaleX(0.8720);transform-origin:0 50%;">Aligner au tel.</span>
<div class="pbtn" style="left:1672px;top:836px;width:70px;height:17px;"></div>
<span class="t ls" style="left:1684.5px;top:836.5px;font-size:12px;line-height:16px;color:#000;transform:scaleX(0.8875);transform-origin:0 50%;">Appliquer</span>
<div style="left:1462px;top:866px;width:280px;height:34px;border:1px solid #c3c6d4;border-radius:4px;box-shadow:inset 1px 1px 0 #fafbfd,1px 1px 0 #fafbfd"></div>
<div style="left:1469px;top:858px;width:42px;height:16px;background:#e9ebf2"></div>
<span class="t ls" style="left:1472.0px;top:858.0px;font-size:12px;line-height:16px;color:#4a5068;transform:scaleX(0.8971);transform-origin:0 50%;">Parking</span>
<div class="pbtn" style="left:1464px;top:875px;width:46.5px;height:17px;"></div>
<span class="t ls" style="left:1474.2px;top:875.5px;font-size:12px;line-height:16px;color:#000;">Nord</span>
<div class="pbtn" style="left:1513px;top:875px;width:41.59999999999991px;height:17px;"></div>
<span class="t ls" style="left:1523.1px;top:875.5px;font-size:12px;line-height:16px;color:#000;">Sud</span>
<div class="pbtn" style="left:1556.5px;top:875px;width:38.5px;height:17px;"></div>
<span class="t ls" style="left:1567.1px;top:875.5px;font-size:12px;line-height:16px;color:#000;">Est</span>
<div class="pbtn" style="left:1596.5px;top:875px;width:45.5px;height:17px;"></div>
<span class="t ls" style="left:1603.2px;top:875.5px;font-size:12px;line-height:16px;color:#000;">Ouest</span>
<div class="pbtn" style="left:1644.7px;top:875px;width:45.700000000000045px;height:17px;"></div>
<span class="t ls" style="left:1652.9px;top:875.5px;font-size:12px;line-height:16px;color:#000;">Utilis.</span>
<div style="left:1694px;top:876.5px;width:32px;height:17px;background:#fff;border:1px solid #aeb2c4"></div>
<span class="t ls" style="left:1696.5px;top:877.0px;font-size:12px;line-height:16px;color:#000;">0</span>
<div style="left:1728px;top:876.5px;width:9px;height:17px;background:#e9ebf2;border:1px solid #c3c6d4;border-right-color:#fafbfd;border-bottom-color:#fafbfd"></div>
<span class="t ls" style="left:1730.0px;top:875.0px;font-size:10px;line-height:14px;color:#4a5068;">°</span>
<div style="left:1462px;top:908px;width:284px;height:90px;border:1px solid #c3c6d4;border-radius:4px 0 0 4px;border-right:0;box-shadow:inset 1px 1px 0 #fafbfd"></div>
<div style="left:1468px;top:900px;width:113px;height:16px;background:#e9ebf2"></div>
<span class="t ls" style="left:1470.5px;top:900.0px;font-size:12px;line-height:16px;color:#4a5068;transform:scaleX(0.8962);transform-origin:0 50%;">Suivi Dome-Telescope</span>
<div style="left:1465px;top:917px;width:14px;height:14px;background:linear-gradient(#f2a07a,#e86a3c);border:1px solid #b8502a;border-radius:2px"></div>
<svg style="left:1467px;top:919px" width="10" height="10" viewBox="0 0 10 10"><path d="M1.200 5.200l2.600 2.800L8.800 1.600" fill="none" stroke="#7a2c10" stroke-width="1.600"/></svg>
<span class="t ls" style="left:1483.0px;top:916.0px;font-size:12px;line-height:16px;color:#000;transform:scaleX(0.8819);transform-origin:0 50%;">Activer suivi coupole sur déplacement sidéral telescope</span>
<span class="t ls" style="left:1464.0px;top:934.0px;font-size:12px;line-height:16px;color:#8a8fa6;transform:scaleX(0.8684);transform-origin:0 50%;">Décalage azimutal max. (°) :</span>
<div style="left:1603px;top:933px;width:41px;height:18px;background:#fff;border:1px solid #aeb2c4"></div>
<span class="t ls" style="left:1606.0px;top:933.5px;font-size:12px;line-height:16px;color:#8a8fa6;">1</span>
<span class="t ls" style="left:1671.5px;top:935.7px;font-size:12px;line-height:16px;color:#4a5068;transform:scaleX(0.9305);transform-origin:0 50%;">Activité</span>
<div style="left:1714px;top:936px;width:27px;height:16px;background:#eceef4;border:1px solid #222"></div>
<span class="t ls" style="left:1464.0px;top:955.5px;font-size:12px;line-height:16px;color:#8a8fa6;transform:scaleX(0.8626);transform-origin:0 50%;">Verifier toute les (minutes) :</span>
<div style="left:1603px;top:955px;width:41px;height:18px;background:#fff;border:1px solid #aeb2c4"></div>
<span class="t ls" style="left:1606.0px;top:955.5px;font-size:12px;line-height:16px;color:#8a8fa6;">1</span>
<svg style="left:1630px;top:957px" width="9" height="14" viewBox="0 0 9 14"><path d="M4.500 .5L8.500 5.500H.5zM4.500 13.500L8.500 8.500H.5z" fill="#111"/></svg>
<span class="t ls" style="left:1668.3px;top:955.5px;font-size:12px;line-height:16px;color:#4a5068;transform:scaleX(0.8890);transform-origin:0 50%;">22:48:39 (1.0°)</span>
<div style="left:1465px;top:979px;width:14px;height:14px;background:linear-gradient(#f2a07a,#e86a3c);border:1px solid #b8502a;border-radius:2px"></div>
<svg style="left:1467px;top:981px" width="10" height="10" viewBox="0 0 10 10"><path d="M1.200 5.200l2.600 2.800L8.800 1.600" fill="none" stroke="#7a2c10" stroke-width="1.600"/></svg>
<span class="t ls" style="left:1483.0px;top:978.2px;font-size:12px;line-height:16px;color:#000;transform:scaleX(0.8955);transform-origin:0 50%;">Déplacer le dome avec le télescope au pointage</span>
<div style="left:1229px;top:1008px;width:93.5px;height:18px;border:1px solid #c0c3d2;border-radius:4px;background:linear-gradient(#f4f5fa,#e4e6ef)"></div>
<span class="t ls" style="left:1234.0px;top:1008.8px;font-size:12px;line-height:16px;color:#9a9fb4;transform:scaleX(0.8847);transform-origin:0 50%;">Ouvrir Dome/Abri</span>
<div style="left:1328px;top:1008px;width:91px;height:18px;border:1px solid #5a6080;border-radius:4px;background:linear-gradient(#e2e4f0,#c8ccdf)"></div>
<span class="t ls" style="left:1330.0px;top:1008.8px;font-size:12px;line-height:16px;color:#000;transform:scaleX(0.8816);transform-origin:0 50%;">Fermer Dome/Abri</span>
<div style="left:1426.4px;top:1008px;width:87.2px;height:18px;border:1px solid #c0c3d2;border-radius:4px;background:linear-gradient(#f4f5fa,#e4e6ef)"></div>
<span class="t ls" style="left:1430.5px;top:1008.8px;font-size:12px;line-height:16px;color:#9a9fb4;font-weight:700;transform:scaleX(0.9809);transform-origin:0 50%;">Arret Urgence</span>
<span class="t ls" style="left:1521.8px;top:1008.8px;font-size:12px;line-height:16px;color:#9a9fb4;transform:scaleX(0.9063);transform-origin:0 50%;">Telescope parké</span>
<div style="left:1607px;top:1010.5px;width:25px;height:12px;background:#eceef4;border:1px solid #222"></div>
<span class="t ls" style="left:1640.6px;top:1008.8px;font-size:12px;line-height:16px;color:#4a5068;transform:scaleX(0.8676);transform-origin:0 50%;">Ferm. urgence</span>
<div style="left:1714px;top:1010.5px;width:25px;height:12px;background:#eceef4;border:1px solid #222"></div>
<div style="left:1229px;top:1031px;width:31px;height:15px;background:#e9ebf2;border:1px solid #c3c6d4;border-right-color:#fafbfd;border-bottom-color:#fafbfd"></div>
<span class="t ls" style="left:1231.0px;top:1030.8px;font-size:12px;line-height:16px;color:#4a5068;transform:scaleX(0.8567);transform-origin:0 50%;">Etat :</span>
<div style="left:1265px;top:1031px;width:190px;height:15px;background:#e9ebf2;border:1px solid #c3c6d4;border-right-color:#fafbfd;border-bottom-color:#fafbfd"></div>
<span class="t ls" style="left:1270.4px;top:1030.8px;font-size:12px;line-height:16px;color:#333849;font-weight:700;letter-spacing:0.098px;">En attente</span>
<div style="left:1462px;top:1031px;width:224px;height:15px;background:#e9ebf2;border:1px solid #c3c6d4;border-right-color:#fafbfd;border-bottom-color:#fafbfd"></div>
<span class="t ls" style="left:1468.0px;top:1030.8px;font-size:12px;line-height:16px;color:#333849;font-weight:700;transform:scaleX(0.9831);transform-origin:0 50%;">Coupole/Abri ouvert !</span>
<span class="t ls" style="left:1687.0px;top:1032.0px;font-size:12px;line-height:16px;color:#4a5068;letter-spacing:-1.200px;">Comm.</span>
<div style="left:1721px;top:1034px;width:25px;height:12px;background:#eceef4;border:1px solid #222"></div>
<div style="left:1754px;top:592px;width:162px;height:455px;background:linear-gradient(#f4fbff,#eef5f9 20px,#f0f6f8);border:1px solid #8fa8b8;box-shadow:0 0 0 1px rgba(255,255,255,.6) inset,1px 2px 4px rgba(0,0,0,.25)"></div>
<span class="t ls" style="left:1761.4px;top:596.0px;font-size:12px;line-height:16px;color:#000;transform:scaleX(0.9733);transform-origin:0 50%;">Gemini</span>
<div style="left:1893px;top:597px;width:16.5px;height:16px;background:#fff;border:1px solid #8a8f98;border-radius:2px"></div>
<svg style="left:1897px;top:601px" width="9" height="8" viewBox="0 0 9 8"><path d="M1.200 1l6.600 6M7.800 1L1.200 7" fill="none" stroke="#333" stroke-width="2.600"/><path d="M1.200 1l6.600 6M7.800 1L1.200 7" fill="none" stroke="#fff" stroke-width="1"/></svg>
<div style="left:1760px;top:616px;width:150px;height:424.5px;background:#000;border:1px solid #777"></div>
<div style="left:1773px;top:629px;width:126px;height:19.5px;background:#430606"></div>
<span class="t ls" style="left:1780.0px;top:629.8px;font-size:12px;line-height:16px;color:#7c2a28;transform:scaleX(0.8565);transform-origin:0 50%;">En suivi</span>
<span class="t ls" style="left:1853.7px;top:629.8px;font-size:12px;line-height:16px;color:#7c2a28;transform:scaleX(0.8877);transform-origin:0 50%;">OUEST</span>
<span class="t ls" style="left:1776.0px;top:653.6px;font-size:12px;line-height:16px;color:#fff;transform:scaleX(0.8994);transform-origin:0 50%;">LST</span>
<span class="t ls" style="left:1850.4px;top:653.6px;font-size:12px;line-height:16px;color:#e01818;transform:scaleX(0.8904);transform-origin:0 50%;">17:40:09</span>
<span class="t ls" style="left:1776.0px;top:669.8px;font-size:12px;line-height:16px;color:#fff;transform:scaleX(0.8997);transform-origin:0 50%;">RA</span>
<span class="t ls" style="left:1850.4px;top:669.8px;font-size:12px;line-height:16px;color:#e01818;transform:scaleX(0.8904);transform-origin:0 50%;">20:16:03</span>
<span class="t ls" style="left:1776.0px;top:686.0px;font-size:12px;line-height:16px;color:#fff;transform:scaleX(0.9277);transform-origin:0 50%;">Dec</span>
<span class="t ls" style="left:1850.4px;top:686.0px;font-size:12px;line-height:16px;color:#e01818;transform:scaleX(0.8904);transform-origin:0 50%;">25:36:37</span>
<span class="t ls" style="left:1776.0px;top:702.0px;font-size:12px;line-height:16px;color:#fff;transform:scaleX(0.8997);transform-origin:0 50%;">HA</span>
<span class="t ls" style="left:1847.6px;top:702.0px;font-size:12px;line-height:16px;color:#e01818;transform:scaleX(0.8754);transform-origin:0 50%;">-02:35:36</span>
<span class="t ls" style="left:1776.0px;top:718.0px;font-size:12px;line-height:16px;color:#fff;transform:scaleX(0.8707);transform-origin:0 50%;">To Limit</span>
<span class="t ls" style="left:1850.4px;top:718.0px;font-size:12px;line-height:16px;color:#e01818;transform:scaleX(0.8904);transform-origin:0 50%;">04:57:12</span>
<svg style="left:1764px;top:744px" width="0" height="0" viewBox="0 0 142 140"><defs><linearGradient id="pg" x1="0" y1="0" x2="1" y2="1"><stop offset="0" stop-color="#fdfdf2"/><stop offset=".5" stop-color="#d8d4b0"/><stop offset="1" stop-color="#a8a27a"/></linearGradient></defs>
</svg>
<svg style="left:1804.8px;top:747.5px" width="60" height="64" viewBox="-30 -30 60 64"><path d="M0 -26L26 0 26 3.500 0 30-26 3.500-26 0z" fill="#57532a" stroke="#57532a" stroke-width="2.400" stroke-linejoin="round"/><path d="M0 -26L26 0 0 26-26 0z" fill="url(#pg)" stroke="url(#pg)" stroke-width="3" stroke-linejoin="round"/></svg>
<svg style="left:1769.3px;top:783px" width="60" height="64" viewBox="-30 -30 60 64"><path d="M0 -26L26 0 26 3.500 0 30-26 3.500-26 0z" fill="#57532a" stroke="#57532a" stroke-width="2.400" stroke-linejoin="round"/><path d="M0 -26L26 0 0 26-26 0z" fill="url(#pg)" stroke="url(#pg)" stroke-width="3" stroke-linejoin="round"/></svg>
<svg style="left:1840.4px;top:783px" width="60" height="64" viewBox="-30 -30 60 64"><path d="M0 -26L26 0 26 3.500 0 30-26 3.500-26 0z" fill="#57532a" stroke="#57532a" stroke-width="2.400" stroke-linejoin="round"/><path d="M0 -26L26 0 0 26-26 0z" fill="url(#pg)" stroke="url(#pg)" stroke-width="3" stroke-linejoin="round"/></svg>
<svg style="left:1804.8px;top:817px" width="60" height="64" viewBox="-30 -30 60 64"><path d="M0 -26L26 0 26 3.500 0 30-26 3.500-26 0z" fill="#57532a" stroke="#57532a" stroke-width="2.400" stroke-linejoin="round"/><path d="M0 -26L26 0 0 26-26 0z" fill="url(#pg)" stroke="url(#pg)" stroke-width="3" stroke-linejoin="round"/></svg>
<div style="left:1768px;top:888px;width:13px;height:13px;background:linear-gradient(135deg,#d8dce8,#fafbfd);border:1px solid #8e8f8f"></div>
<svg style="left:1770px;top:890px" width="9" height="9" viewBox="0 0 9 9"><path d="M1 4.500l2.400 2.800L8 .8" fill="none" stroke="#2a3a9a" stroke-width="1.700"/></svg>
<span class="t ls" style="left:1787.4px;top:879.5px;font-size:12px;line-height:16px;color:#fff;transform:scaleX(0.8741);transform-origin:0 50%;">Inv</span>
<span class="t ls" style="left:1787.4px;top:893.0px;font-size:12px;line-height:16px;color:#fff;transform:scaleX(0.8997);transform-origin:0 50%;">RA</span>
<div style="left:1888px;top:888px;width:13px;height:13px;background:linear-gradient(135deg,#d8dce8,#fafbfd);border:1px solid #8e8f8f"></div>
<svg style="left:1890px;top:890px" width="9" height="9" viewBox="0 0 9 9"><path d="M1 4.500l2.400 2.800L8 .8" fill="none" stroke="#2a3a9a" stroke-width="1.700"/></svg>
<span class="t ls" style="left:1865.3px;top:879.5px;font-size:12px;line-height:16px;color:#fff;transform:scaleX(0.8741);transform-origin:0 50%;">Inv</span>
<span class="t ls" style="left:1860.3px;top:893.0px;font-size:12px;line-height:16px;color:#fff;transform:scaleX(0.8902);transform-origin:0 50%;">Dec</span>
<div style="left:1768.7px;top:921.7px;width:133.7px;height:30.5px;border:2px solid #fff;border-radius:4px"></div>
<div style="left:1775px;top:914px;width:37px;height:14px;background:#000"></div>
<span class="t ls" style="left:1777.0px;top:913.5px;font-size:12px;line-height:16px;color:#fff;transform:scaleX(0.8431);transform-origin:0 50%;">Vitesse</span>
<div style="left:1780.5px;top:932.6px;width:12px;height:12px;border-radius:50%;border:1px solid #777;background:radial-gradient(circle at 40% 35%,#fff,#d0d0d0 70%,#999)"></div>
<div style="left:1783.5px;top:935.6px;width:6px;height:6px;border-radius:50%;background:radial-gradient(circle at 35% 30%,#7fd8f0,#1878a8 60%,#0c3c60)"></div>
<span class="t ls" style="left:1800.0px;top:931.0px;font-size:12px;line-height:16px;color:#fff;">G</span>
<div style="left:1820px;top:932.6px;width:12px;height:12px;border-radius:50%;border:1px solid #777;background:radial-gradient(circle at 40% 35%,#fff,#d0d0d0 70%,#999)"></div>
<span class="t ls" style="left:1838.7px;top:931.0px;font-size:12px;line-height:16px;color:#fff;">C</span>
<div style="left:1858px;top:932.6px;width:12px;height:12px;border-radius:50%;border:1px solid #777;background:radial-gradient(circle at 40% 35%,#fff,#d0d0d0 70%,#999)"></div>
<span class="t ls" style="left:1877.0px;top:931.0px;font-size:12px;line-height:16px;color:#fff;">S</span>
<div style="left:1768px;top:960px;width:13px;height:13px;background:linear-gradient(135deg,#d8dce8,#fafbfd);border:1px solid #8e8f8f"></div>
<svg style="left:1770px;top:962px" width="9" height="9" viewBox="0 0 9 9"><path d="M1 4.500l2.400 2.800L8 .8" fill="none" stroke="#2a3a9a" stroke-width="1.700"/></svg>
<span class="t ls" style="left:1787.4px;top:958.7px;font-size:12px;line-height:16px;color:#fff;transform:scaleX(0.8533);transform-origin:0 50%;">Suivi</span>
<div style="left:1855px;top:959.3px;width:46.5px;height:16.3px;background:#3c3c3c"></div>
<span class="t ls" style="left:1859.0px;top:959.5px;font-size:12px;line-height:16px;color:#565656;">PEC</span>
<div style="left:1887.5px;top:961px;width:13px;height:13px;background:#ececec;border:1px solid #aaa"></div>
<div style="left:1768px;top:981.6px;width:42px;height:24.3px;border:1px solid #bbb;background:#000"></div>
<span class="t ls" style="left:1776.0px;top:986.0px;font-size:12px;line-height:16px;color:#fff;transform:scaleX(0.8993);transform-origin:0 50%;text-decoration:underline;">Func</span>
<div style="left:1812.6px;top:981.6px;width:42.100000000000136px;height:24.3px;border:1px solid #bbb;background:#000"></div>
<span class="t ls" style="left:1822.1px;top:986.0px;font-size:12px;line-height:16px;color:#fff;transform:scaleX(0.8668);transform-origin:0 50%;text-decoration:underline;">Park</span>
<div style="left:1857px;top:981.6px;width:45px;height:24.3px;border:1px solid #bbb;background:#000"></div>
<span class="t ls" style="left:1865.2px;top:986.0px;font-size:12px;line-height:16px;color:#fff;transform:scaleX(0.8610);transform-origin:0 50%;text-decoration:underline;">Setup</span>
<div style="left:1768.7px;top:1013.3px;width:132.3px;height:18px;border:1px solid #707070;border-radius:3px;background:linear-gradient(#f6f6f6,#e8e8e8 50%,#d8d8d8)"></div>
<span class="t ls" style="left:1803.5px;top:1014.5px;font-size:12px;line-height:16px;color:#000;transform:scaleX(0.8964);transform-origin:0 50%;">Déconnecter</span>
<div style="left:556px;top:144px;width:969px;height:633px;background:linear-gradient(90deg,#55585c 0px,#5e6266 40px,#747a80 95px,#8d98a6 104px,#7f8fb4 112px,#6673a4 118px,#7f94c0 124px,#a9c6e6 132px,#b4d0ee 146px,#4a5486 152px,#3f4878 156px,#5a6a9c 160px,#a6c4e6 166px,#a8c6e8 398px,#b2cdec 406px,#4a5486 412px,#3f4878 417px,#5a6a9c 421px,#a6c4e6 427px,#a5c3e6 664px,#5a6a90 672px,#2d3262 676px,#2d3262 682px,#4b4f58 690px,#15171b 720px,#08090b 800px,#0b0c0f 969px);border-radius:7px;border:1px solid rgba(10,12,16,.8);box-shadow:inset 0 0 0 1px rgba(255,255,255,.5),0 1px 9px 2px rgba(0,0,0,.42)"></div>
<div style="left:558px;top:172px;width:4px;height:600px;background:linear-gradient(#6c7074 0,#5c5f62 90px,#3a3c3f 230px,#1c2024 330px,#14181c 376px,#343a66 380px,#343a66 404px,#0c1014 408px,#0a0c10 600px)"></div>
<div style="left:562px;top:771px;width:957px;height:4px;background:linear-gradient(90deg,#0a0c10 0,#0a0c10 660px,#2d3262 664px,#42140a 670px,#4a2a22 700px,#8a8a90 780px,#9a9aa0 893px,#c9d4e4 900px,#cfd9e8 957px)"></div>
<div style="left:558px;top:771px;width:5px;height:4px;background:#0a0c10;border-radius:0 0 0 4px"></div>
<div style="left:1519px;top:172px;width:4px;height:603px;background:linear-gradient(#101114 0,#08090b 380px,#6d7fa8 386px,#2d3262 392px,#2d3262 420px,#a9c8ea 424px,#a9c8ea 552px,#2d3262 556px,#2d3262 574px,#c0d0e6 578px,#c0d0e6 603px);border-radius:0 0 4px 0"></div>
<div style="left:557px;top:145px;width:967px;height:27px;background:linear-gradient(rgba(255,255,255,.38),rgba(255,255,255,.12) 40%,rgba(255,255,255,0) 60%);border-radius:6px 6px 0 0"></div>
<div style="left:1240px;top:145px;width:279px;height:11px;background:linear-gradient(rgba(190,202,222,.6),rgba(150,162,186,.45) 55%,rgba(60,66,80,0))"></div>
<div style="left:720px;top:148px;width:240px;height:18px;background:#c9a3a6;filter:blur(3px);opacity:.9"></div>
<div style="left:800px;top:152px;width:70px;height:9px;background:#8d6f78;filter:blur(3px);opacity:.8"></div>
<div style="left:578px;top:147px;width:84px;height:22px;background:rgba(255,255,255,.5);filter:blur(6px);border-radius:10px"></div>
<svg style="left:563px;top:150px" width="16" height="16" viewBox="0 0 16 16"><rect width="16" height="16" fill="#050510"/><circle cx="8.5" cy="4.5" r="1.6" fill="#3fd34a"/><circle cx="12.2" cy="7" r="1.5" fill="#e8402c"/><circle cx="11" cy="2.6" r="1" fill="#f2e24a"/><circle cx="4" cy="3.2" r=".9" fill="#4060e0"/><circle cx="5.8" cy="7.4" r=".9" fill="#22b8c8"/><circle cx="2.4" cy="6.8" r=".7" fill="#a040c0"/><circle cx="13.6" cy="3.6" r=".7" fill="#e08030"/><text x="8" y="14.6" font-family="Liberation Serif,serif" font-size="7.5" font-weight="700" fill="#fff" text-anchor="middle">ISIS</text></svg>
<span class="t ls" style="left:584.0px;top:150.0px;font-size:12px;line-height:16px;color:#0a0a0a;transform:scaleX(0.9258);transform-origin:0 50%;">ISIS - V5.5.2</span>
<div style="left:1416px;top:144px;width:103px;height:19px;border:1px solid rgba(20,22,28,.85);border-top:0;border-radius:0 0 5px 5px;box-shadow:0 0 0 1px rgba(255,255,255,.35);background:linear-gradient(rgba(228,232,240,.9),rgba(160,166,178,.75) 40%,rgba(90,96,108,.7) 50%,rgba(52,56,66,.7) 54%,rgba(96,102,114,.6))"></div>
<div style="left:1471px;top:144px;width:47px;height:18px;background:linear-gradient(#e9a99c,#d5705f 45%,#c03a27 52%,#d26a4c);border-radius:0 0 4px 0;border-left:1px solid rgba(30,20,20,.8)"></div>
<div style="left:1444px;top:144px;width:1px;height:18px;background:rgba(20,22,28,.85)"></div>
<div style="left:1445px;top:144px;width:1px;height:18px;background:rgba(255,255,255,.3)"></div>
<div style="left:1425px;top:155px;width:11px;height:4px;background:#fff;border:1px solid #46505e;border-radius:1px"></div>
<div style="left:1452px;top:149px;width:12px;height:9px;background:#fff;border:1px solid #46505e;border-radius:1px"></div>
<div style="left:1455px;top:152px;width:6px;height:3px;background:#5d6674;border:1px solid #39424f"></div>
<svg style="left:1488px;top:147.500px" width="15" height="12" viewBox="0 0 15 12"><path d="M1 1h4l2.500 2.800L10 1h4L9.600 6l4.400 5h-4L7.500 8.200 5 11H1l4.400-5z" fill="#fff" stroke="#4a2420" stroke-width="1" stroke-linejoin="round"/></svg>
<div style="left:562px;top:172px;width:957px;height:599px;background:#f0f0f0;border:1px solid #3e4248;box-shadow:0 0 0 1px rgba(255,255,255,.38)"></div>
<span class="t ls" style="left:587.0px;top:184.5px;font-size:11px;line-height:15px;color:#111;transform:scaleX(0.9343);transform-origin:0 50%;">1. Image</span>
<span class="t ls" style="left:673.8px;top:184.5px;font-size:11px;line-height:15px;color:#111;transform:scaleX(0.9489);transform-origin:0 50%;">2. Général</span>
<span class="t ls" style="left:760.0px;top:184.5px;font-size:11px;line-height:15px;color:#111;transform:scaleX(0.9574);transform-origin:0 50%;">3. Etalonnage</span>
<span class="t ls" style="left:863.0px;top:184.5px;font-size:11px;line-height:15px;color:#111;transform:scaleX(0.9106);transform-origin:0 50%;">4. Go</span>
<span class="t ls" style="left:1018.8px;top:184.5px;font-size:11px;line-height:15px;color:#111;transform:scaleX(0.9504);transform-origin:0 50%;">6. Gnuplot</span>
<span class="t ls" style="left:1111.0px;top:184.5px;font-size:11px;line-height:15px;color:#111;transform:scaleX(0.9540);transform-origin:0 50%;">Maîtres</span>
<span class="t ls" style="left:1192.5px;top:184.5px;font-size:11px;line-height:15px;color:#111;transform:scaleX(0.9067);transform-origin:0 50%;">Outils</span>
<span class="t ls" style="left:1265.0px;top:184.5px;font-size:11px;line-height:15px;color:#111;transform:scaleX(0.9303);transform-origin:0 50%;">Divers</span>
<span class="t ls" style="left:1335.0px;top:184.5px;font-size:11px;line-height:15px;color:#111;transform:scaleX(0.9222);transform-origin:0 50%;">Instruments</span>
<span class="t ls" style="left:1422.5px;top:184.5px;font-size:11px;line-height:15px;color:#111;transform:scaleX(0.9398);transform-origin:0 50%;">Configuration</span>
<div style="left:650px;top:182px;width:1px;height:21px;background:#a0a0a0"></div>
<div style="left:651px;top:182px;width:1px;height:21px;background:#fdfdfd"></div>
<div style="left:745px;top:182px;width:1px;height:21px;background:#a0a0a0"></div>
<div style="left:746px;top:182px;width:1px;height:21px;background:#fdfdfd"></div>
<div style="left:839px;top:182px;width:1px;height:21px;background:#a0a0a0"></div>
<div style="left:840px;top:182px;width:1px;height:21px;background:#fdfdfd"></div>
<div style="left:911px;top:182px;width:1px;height:21px;background:#a0a0a0"></div>
<div style="left:912px;top:182px;width:1px;height:21px;background:#fdfdfd"></div>
<div style="left:998px;top:182px;width:1px;height:21px;background:#a0a0a0"></div>
<div style="left:999px;top:182px;width:1px;height:21px;background:#fdfdfd"></div>
<div style="left:1087px;top:182px;width:1px;height:21px;background:#a0a0a0"></div>
<div style="left:1088px;top:182px;width:1px;height:21px;background:#fdfdfd"></div>
<div style="left:1169px;top:182px;width:1px;height:21px;background:#a0a0a0"></div>
<div style="left:1170px;top:182px;width:1px;height:21px;background:#fdfdfd"></div>
<div style="left:1241px;top:182px;width:1px;height:21px;background:#a0a0a0"></div>
<div style="left:1242px;top:182px;width:1px;height:21px;background:#fdfdfd"></div>
<div style="left:1317px;top:182px;width:1px;height:21px;background:#a0a0a0"></div>
<div style="left:1318px;top:182px;width:1px;height:21px;background:#fdfdfd"></div>
<div style="left:1405px;top:182px;width:1px;height:21px;background:#a0a0a0"></div>
<div style="left:1406px;top:182px;width:1px;height:21px;background:#fdfdfd"></div>
<div style="left:1501px;top:182px;width:1px;height:21px;background:#a0a0a0"></div>
<div style="left:1502px;top:182px;width:1px;height:21px;background:#fdfdfd"></div>
<div style="left:917px;top:183px;width:76px;height:19px;background:#f6f6f6;border:1px solid #fff;border-top-color:#696969;border-left-color:#696969;box-shadow:inset 1px 1px 0 #a0a0a0"></div>
<span class="t ls" style="left:939.5px;top:185.5px;font-size:11px;line-height:15px;color:#111;transform:scaleX(0.9116);transform-origin:0 50%;">5. Profil</span>
<span class="t ls" style="left:579.5px;top:228.5px;font-size:11px;line-height:15px;color:#111;transform:scaleX(0.9297);transform-origin:0 50%;">Nom du profil :</span>
<div style="left:658px;top:226px;width:255px;height:20px;background:#f7feff;border:1px solid #e3e9ef;border-top-color:#abadb3"></div>
<span class="t ls" style="left:661.0px;top:228.5px;font-size:11px;line-height:15px;color:#111;transform:scaleX(0.9640);transform-origin:0 50%;">_qrvul_20160728_858_full</span>
<div class="btn7" style="left:929px;top:223px;width:102px;height:24px;"></div>
<span class="t ls" style="left:961.0px;top:227.0px;font-size:11px;line-height:15px;color:#111;transform:scaleX(0.9975);transform-origin:0 50%;">Afficher</span>
<div style="left:1058.5px;top:228.0px;width:13px;height:13px;border-radius:50%;border:1px solid #8e8f8f;background:radial-gradient(circle at 50% 50%,#fdfdfd 0,#e4e4e4 60%,#c9c9c9 100%)"></div>
<div style="left:1061.5px;top:231.0px;width:7px;height:7px;border-radius:50%;background:radial-gradient(circle at 35% 30%,#8fe0f4 0,#1f86b8 55%,#0d4a74 100%)"></div>
<span class="t ls" style="left:1078.0px;top:227.5px;font-size:11px;line-height:15px;color:#111;transform:scaleX(0.9227);transform-origin:0 50%;">FITS</span>
<div style="left:1116.0px;top:228.0px;width:13px;height:13px;border-radius:50%;border:1px solid #8e8f8f;background:radial-gradient(circle at 50% 50%,#fdfdfd 0,#e4e4e4 60%,#c9c9c9 100%)"></div>
<span class="t ls" style="left:1136.0px;top:227.5px;font-size:11px;line-height:15px;color:#111;letter-spacing:0.104px;">DAT</span>
<div class="btn7" style="left:1223px;top:223px;width:40px;height:23px;"></div>
<svg style="left:1234px;top:227px" width="18" height="16" viewBox="0 0 18 16"><path d="M1.5 1.5h7l2 2v8h-9z" fill="#d8e8f8" stroke="#7a9cc8"/><path d="M7.5 4.5h7l2 2v8h-9z" fill="#e4f0fb" stroke="#7a9cc8"/></svg>
<div class="btn7" style="left:1339px;top:216px;width:63px;height:38px;"></div>
<svg style="left:1352px;top:217px" width="36" height="32" viewBox="0 0 36 32"><path d="M3 5h9l2 2h10v4H3z" fill="#f3cf62" stroke="#d8a93a" stroke-width=".8"/><path d="M3 25V9h22v4" fill="#fbe8a0" stroke="#d8a93a" stroke-width=".8"/><path d="M3 25l4-12h22l-4 12z" fill="#f7d56c" stroke="#d8a93a" stroke-width=".8"/><circle cx="22" cy="19" r="6" fill="#bfe6fb" stroke="#6aaee0" stroke-width="1.6"/><circle cx="22" cy="19" r="7.2" fill="none" stroke="#e8eef4" stroke-width=".8"/><path d="M26.5 23.5l5.5 5.5" stroke="#e6b84c" stroke-width="3.2" stroke-linecap="round"/></svg>
<div style="left:1435px;top:223px;width:74px;height:20px;border:1px solid #707070;border-radius:3px;background:linear-gradient(#f2f2f2,#ebebeb 50%,#dddddd 51%,#cfcfcf);box-shadow:inset 0 0 0 1px #fcfcfc"></div>
<span class="t ls" style="left:1438.0px;top:225.5px;font-size:11px;line-height:15px;color:#111;transform:scaleX(0.9844);transform-origin:0 50%;">x 0.25</span>
<svg style="left:1496px;top:231px" width="8" height="5" viewBox="0 0 8 5"><path d="M0 0h8L4 4.5z" fill="#000"/></svg>
<div class="btn7" style="left:1426px;top:257px;width:83px;height:41px;"></div>
<span class="t ls" style="left:1449.6px;top:270.5px;font-size:11px;line-height:15px;color:#111;">Sauver</span>
<div class="btn7" style="left:1426px;top:304px;width:83px;height:24px;"></div>
<span class="t ls" style="left:1451.1px;top:309.0px;font-size:11px;line-height:15px;color:#111;">Entête</span>
<div class="btn7" style="left:1426px;top:350px;width:83px;height:26px;"></div>
<span class="t ls" style="left:1443.5px;top:356.0px;font-size:11px;line-height:15px;color:#111;">Database</span>
<div class="btn7" style="left:1426px;top:384px;width:83px;height:24px;"></div>
<span class="t ls" style="left:1441.0px;top:389.0px;font-size:11px;line-height:15px;color:#111;">Dispersion</span>
<div class="btn7" style="left:1426px;top:416px;width:83px;height:24px;"></div>
<span class="t ls" style="left:1445.0px;top:421.0px;font-size:11px;line-height:15px;color:#111;">Réponse</span>
<div class="btn7" style="left:1426px;top:448px;width:83px;height:24px;"></div>
<span class="t ls" style="left:1442.5px;top:453.0px;font-size:11px;line-height:15px;color:#111;">Comparer</span>
<div class="btn7" style="left:1426px;top:480px;width:83px;height:24px;"></div>
<span class="t ls" style="left:1440.4px;top:485.0px;font-size:11px;line-height:15px;color:#111;">Continuum</span>
<div class="btn7" style="left:1426px;top:512px;width:83px;height:24px;"></div>
<span class="t ls" style="left:1452.6px;top:517.0px;font-size:11px;line-height:15px;color:#111;">Editer</span>
<div class="btn7" style="left:1426px;top:544px;width:83px;height:24px;"></div>
<span class="t ls" style="left:1449.9px;top:549.0px;font-size:11px;line-height:15px;color:#111;">FWHM</span>
<div class="btn7" style="left:1426px;top:576px;width:83px;height:24px;"></div>
<span class="t ls" style="left:1436.1px;top:581.0px;font-size:11px;line-height:15px;color:#111;">Arithmétique</span>
<div class="btn7" style="left:1426px;top:608px;width:83px;height:24px;"></div>
<span class="t ls" style="left:1455.7px;top:613.0px;font-size:11px;line-height:15px;color:#111;">H2O</span>
<div class="btn7" style="left:1426px;top:640px;width:83px;height:24px;"></div>
<span class="t ls" style="left:1448.0px;top:645.0px;font-size:11px;line-height:15px;color:#111;">Décaler</span>
<div class="btn7" style="left:1426px;top:672px;width:83px;height:24px;"></div>
<span class="t ls" style="left:1440.4px;top:677.0px;font-size:11px;line-height:15px;color:#111;">Normaliser</span>
<div class="btn7" style="left:1426px;top:704px;width:83px;height:24px;"></div>
<span class="t ls" style="left:1443.1px;top:709.0px;font-size:11px;line-height:15px;color:#111;">Découper</span>
<div class="btn7" style="left:1426px;top:736px;width:83px;height:24px;"></div>
<span class="t ls" style="left:1452.9px;top:741.0px;font-size:11px;line-height:15px;color:#111;">Filtrer</span>
<div style="left:576px;top:263px;width:826px;height:418px;background:#fff;border:1px solid #000;border-right-color:#222"></div>
<svg style="left:577px;top:263px" width="824" height="417" viewBox="0 0 824 417"><path d="M0.0 62.1 L1.0 60.0 L2.0 56.2 L3.0 55.4 L4.0 56.1 L5.0 58.4 L6.0 61.3 L7.0 62.0 L8.0 64.1 L9.0 64.7 L10.0 61.4 L11.0 57.7 L12.0 52.2 L13.0 62.4 L14.0 69.6 L15.0 64.4 L16.0 56.8 L17.0 51.6 L18.0 51.8 L19.0 54.5 L20.0 57.6 L21.0 59.8 L22.0 64.4 L23.0 67.2 L24.0 72.3 L25.0 69.7 L26.0 65.8 L27.0 65.7 L28.0 61.7 L29.0 64.6 L30.0 69.6 L31.0 76.6 L32.0 84.1 L33.0 91.4 L34.0 84.1 L35.0 75.5 L36.0 66.6 L37.0 57.9 L38.0 62.9 L39.0 69.4 L40.0 71.7 L41.0 77.4 L42.0 80.4 L43.0 74.5 L44.0 72.4 L45.0 70.0 L46.0 62.6 L47.0 60.6 L48.0 62.6 L49.0 63.5 L50.0 66.6 L51.0 67.7 L52.0 67.9 L53.0 72.1 L54.0 73.6 L55.0 75.6 L56.0 72.6 L57.0 67.9 L58.0 64.1 L59.0 59.0 L60.0 60.3 L61.0 60.1 L62.0 61.4 L63.0 61.6 L64.0 63.0 L65.0 64.2 L66.0 65.4 L67.0 60.9 L68.0 60.7 L69.0 61.7 L70.0 64.2 L71.0 66.4 L72.0 66.9 L73.0 64.5 L74.0 65.7 L75.0 62.7 L76.0 62.5 L77.0 68.3 L78.0 71.8 L79.0 72.9 L80.0 74.3 L81.0 75.7 L82.0 78.3 L83.0 76.6 L84.0 74.7 L85.0 72.9 L86.0 68.8 L87.0 81.2 L88.0 90.2 L89.0 99.1 L90.0 105.6 L91.0 95.3 L92.0 85.1 L93.0 70.4 L94.0 66.8 L95.0 69.1 L96.0 67.6 L97.0 71.8 L98.0 71.6 L99.0 77.3 L100.0 84.4 L101.0 80.0 L102.0 74.8 L103.0 71.3 L104.0 71.5 L105.0 73.9 L106.0 77.7 L107.0 80.0 L108.0 82.3 L109.0 87.7 L110.0 91.6 L111.0 93.1 L112.0 95.7 L113.0 100.7 L114.0 104.2 L115.0 98.5 L116.0 94.8 L117.0 86.5 L118.0 83.4 L119.0 75.0 L120.0 71.8 L121.0 73.7 L122.0 74.7 L123.0 74.8 L124.0 74.6 L125.0 74.8 L126.0 75.6 L127.0 77.0 L128.0 77.0 L129.0 78.4 L130.0 79.6 L131.0 86.3 L132.0 94.5 L133.0 101.6 L134.0 110.5 L135.0 105.5 L136.0 96.9 L137.0 89.3 L138.0 82.0 L139.0 88.5 L140.0 92.6 L141.0 88.7 L142.0 85.5 L143.0 76.1 L144.0 72.8 L145.0 76.8 L146.0 79.4 L147.0 76.1 L148.0 72.2 L149.0 70.2 L150.0 66.7 L151.0 62.6 L152.0 62.7 L153.0 57.3 L154.0 55.6 L155.0 59.0 L156.0 61.8 L157.0 64.9 L158.0 58.7 L159.0 57.2 L160.0 55.2 L161.0 48.5 L162.0 45.0 L163.0 41.5 L164.0 36.8 L165.0 37.8 L166.0 37.9 L167.0 43.0 L168.0 44.3 L169.0 46.7 L170.0 56.2 L171.0 61.4 L172.0 74.2 L173.0 80.4 L174.0 87.1 L175.0 89.0 L176.0 95.2 L177.0 97.2 L178.0 91.3 L179.0 91.1 L180.0 97.1 L181.0 101.7 L182.0 106.7 L183.0 111.4 L184.0 108.1 L185.0 105.3 L186.0 110.3 L187.0 108.5 L188.0 112.8 L189.0 113.6 L190.0 116.0 L191.0 118.7 L192.0 120.2 L193.0 108.6 L194.0 94.2 L195.0 82.2 L196.0 75.0 L197.0 67.6 L198.0 61.9 L199.0 55.8 L200.0 53.1 L201.0 46.9 L202.0 42.0 L203.0 38.5 L204.0 40.6 L205.0 40.5 L206.0 43.7 L207.0 45.7 L208.0 46.7 L209.0 53.1 L210.0 56.1 L211.0 58.6 L212.0 60.2 L213.0 67.5 L214.0 69.3 L215.0 72.3 L216.0 76.9 L217.0 77.7 L218.0 75.5 L219.0 69.4 L220.0 74.6 L221.0 77.1 L222.0 78.1 L223.0 77.3 L224.0 77.8 L225.0 80.8 L226.0 80.8 L227.0 85.3 L228.0 91.2 L229.0 93.8 L230.0 96.0 L231.0 102.6 L232.0 96.6 L233.0 95.2 L234.0 90.3 L235.0 84.9 L236.0 83.7 L237.0 85.1 L238.0 84.8 L239.0 86.8 L240.0 85.8 L241.0 84.6 L242.0 81.4 L243.0 91.1 L244.0 103.9 L245.0 121.0 L246.0 107.0 L247.0 96.9 L248.0 84.9 L249.0 84.7 L250.0 83.4 L251.0 86.0 L252.0 87.1 L253.0 87.8 L254.0 85.6 L255.0 88.0 L256.0 92.8 L257.0 86.8 L258.0 88.1 L259.0 89.3 L260.0 85.3 L261.0 81.8 L262.0 84.1 L263.0 89.4 L264.0 80.4 L265.0 83.8 L266.0 89.1 L267.0 88.3 L268.0 85.7 L269.0 88.3 L270.0 87.0 L271.0 84.9 L272.0 85.8 L273.0 91.4 L274.0 99.1 L275.0 96.7 L276.0 90.8 L277.0 86.5 L278.0 81.9 L279.0 84.6 L280.0 79.1 L281.0 84.2 L282.0 75.2 L283.0 84.1 L284.0 80.9 L285.0 76.6 L286.0 85.4 L287.0 82.1 L288.0 75.6 L289.0 79.7 L290.0 83.2 L291.0 80.3 L292.0 84.0 L293.0 83.5 L294.0 82.8 L295.0 81.3 L296.0 85.2 L297.0 85.1 L298.0 86.4 L299.0 80.1 L300.0 92.5 L301.0 96.3 L302.0 93.5 L303.0 95.5 L304.0 97.4 L305.0 79.2 L306.0 82.3 L307.0 84.4 L308.0 73.3 L309.0 78.6 L310.0 82.4 L311.0 75.7 L312.0 77.9 L313.0 78.9 L314.0 72.8 L315.0 75.4 L316.0 76.6 L317.0 78.2 L318.0 75.3 L319.0 74.7 L320.0 71.8 L321.0 73.9 L322.0 77.9 L323.0 75.4 L324.0 72.4 L325.0 72.5 L326.0 83.3 L327.0 79.2 L328.0 77.7 L329.0 67.7 L330.0 77.8 L331.0 77.4 L332.0 81.5 L333.0 77.5 L334.0 75.9 L335.0 78.0 L336.0 69.9 L337.0 79.8 L338.0 77.6 L339.0 74.3 L340.0 81.1 L341.0 82.8 L342.0 72.3 L343.0 74.8 L344.0 78.0 L345.0 77.7 L346.0 75.8 L347.0 74.0 L348.0 84.2 L349.0 80.7 L350.0 73.4 L351.0 73.0 L352.0 83.1 L353.0 80.8 L354.0 83.6 L355.0 80.3 L356.0 74.8 L357.0 78.6 L358.0 70.6 L359.0 75.3 L360.0 77.7 L361.0 79.6 L362.0 75.5 L363.0 77.6 L364.0 79.6 L365.0 79.3 L366.0 80.3 L367.0 78.9 L368.0 77.2 L369.0 80.9 L370.0 78.5 L371.0 75.7 L372.0 76.4 L373.0 78.5 L374.0 78.2 L375.0 79.1 L376.0 78.6 L377.0 79.3 L378.0 78.3 L379.0 74.6 L380.0 80.2 L381.0 82.4 L382.0 80.4 L383.0 78.4 L384.0 80.5 L385.0 76.0 L386.0 73.0 L387.0 79.5 L388.0 76.3 L389.0 81.9 L390.0 75.9 L391.0 71.7 L392.0 76.2 L393.0 85.0 L394.0 78.6 L395.0 75.4 L396.0 77.5 L397.0 81.8 L398.0 81.8 L399.0 80.8 L400.0 85.2 L401.0 82.7 L402.0 80.4 L403.0 82.5 L404.0 86.0 L405.0 83.9 L406.0 84.1 L407.0 77.2 L408.0 80.4 L409.0 83.4 L410.0 80.0 L411.0 84.6 L412.0 83.1 L413.0 84.2 L414.0 80.6 L415.0 89.3 L416.0 85.6 L417.0 80.8 L418.0 81.9 L419.0 89.6 L420.0 80.6 L421.0 84.7 L422.0 85.2 L423.0 82.0 L424.0 78.2 L425.0 82.7 L426.0 83.2 L427.0 85.8 L428.0 84.7 L429.0 82.2 L430.0 84.9 L431.0 83.9 L432.0 82.8 L433.0 82.4 L434.0 81.4 L435.0 84.5 L436.0 78.8 L437.0 80.2 L438.0 82.3 L439.0 77.5 L440.0 80.9 L441.0 75.7 L442.0 80.1 L443.0 84.2 L444.0 84.3 L445.0 82.2 L446.0 81.7 L447.0 77.8 L448.0 88.5 L449.0 84.2 L450.0 86.1 L451.0 79.6 L452.0 81.9 L453.0 76.5 L454.0 85.1 L455.0 85.7 L456.0 76.3 L457.0 82.4 L458.0 84.7 L459.0 76.8 L460.0 76.6 L461.0 79.2 L462.0 80.6 L463.0 78.1 L464.0 82.8 L465.0 83.6 L466.0 84.9 L467.0 85.1 L468.0 87.8 L469.0 86.7 L470.0 78.5 L471.0 81.2 L472.0 79.4 L473.0 79.4 L474.0 82.7 L475.0 83.0 L476.0 84.6 L477.0 77.7 L478.0 78.9 L479.0 82.9 L480.0 82.4 L481.0 82.0 L482.0 82.8 L483.0 80.5 L484.0 85.4 L485.0 84.2 L486.0 82.8 L487.0 80.9 L488.0 82.5 L489.0 75.2 L490.0 79.9 L491.0 83.3 L492.0 78.2 L493.0 83.8 L494.0 83.7 L495.0 78.6 L496.0 82.4 L497.0 82.2 L498.0 84.7 L499.0 85.3 L500.0 83.1 L501.0 80.4 L502.0 82.8 L503.0 83.1 L504.0 85.7 L505.0 84.3 L506.0 80.9 L507.0 78.9 L508.0 82.1 L509.0 80.9 L510.0 79.7 L511.0 83.0 L512.0 81.8 L513.0 83.7 L514.0 85.1 L515.0 82.0 L516.0 91.1 L517.0 82.4 L518.0 87.1 L519.0 83.9 L520.0 87.1 L521.0 75.6 L522.0 81.0 L523.0 84.3 L524.0 85.5 L525.0 91.3 L526.0 84.6 L527.0 87.8 L528.0 86.2 L529.0 86.8 L530.0 85.4 L531.0 83.2 L532.0 85.4 L533.0 80.2 L534.0 87.7 L535.0 80.5 L536.0 84.7 L537.0 90.9 L538.0 83.2 L539.0 84.0 L540.0 87.8 L541.0 84.1 L542.0 81.3 L543.0 84.9 L544.0 86.0 L545.0 86.4 L546.0 81.6 L547.0 89.9 L548.0 89.7 L549.0 84.3 L550.0 85.1 L551.0 82.8 L552.0 88.9 L553.0 82.0 L554.0 86.6 L555.0 82.8 L556.0 82.1 L557.0 86.8 L558.0 88.8 L559.0 84.4 L560.0 82.3 L561.0 87.2 L562.0 84.4 L563.0 85.6 L564.0 89.6 L565.0 88.4 L566.0 82.9 L567.0 92.2 L568.0 84.7 L569.0 87.3 L570.0 82.6 L571.0 84.6 L572.0 79.0 L573.0 90.7 L574.0 89.4 L575.0 80.9 L576.0 80.0 L577.0 79.6 L578.0 88.9 L579.0 83.5 L580.0 84.8 L581.0 84.0 L582.0 84.7 L583.0 81.5 L584.0 85.2 L585.0 80.4 L586.0 85.0 L587.0 86.2 L588.0 86.8 L589.0 84.5 L590.0 82.3 L591.0 85.9 L592.0 83.8 L593.0 90.5 L594.0 87.9 L595.0 85.1 L596.0 83.9 L597.0 83.2 L598.0 82.4 L599.0 84.4 L600.0 86.5 L601.0 87.3 L602.0 87.5 L603.0 92.6 L604.0 83.4 L605.0 85.7 L606.0 93.7 L607.0 79.6 L608.0 84.1 L609.0 86.4 L610.0 86.3 L611.0 87.2 L612.0 85.1 L613.0 87.1 L614.0 86.1 L615.0 88.5 L616.0 79.8 L617.0 83.1 L618.0 86.1 L619.0 82.7 L620.0 82.7 L621.0 88.2 L622.0 84.1 L623.0 88.3 L624.0 88.7 L625.0 87.3 L626.0 88.0 L627.0 86.0 L628.0 81.8 L629.0 86.4 L630.0 88.0 L631.0 84.8 L632.0 86.2 L633.0 89.1 L634.0 83.7 L635.0 88.8 L636.0 92.8 L637.0 84.9 L638.0 87.3 L639.0 86.3 L640.0 91.9 L641.0 87.9 L642.0 89.9 L643.0 84.7 L644.0 86.9 L645.0 87.0 L646.0 81.2 L647.0 91.8 L648.0 90.1 L649.0 81.4 L650.0 89.6 L651.0 86.8 L652.0 88.7 L653.0 88.5 L654.0 82.4 L655.0 86.7 L656.0 92.3 L657.0 85.5 L658.0 84.1 L659.0 83.0 L660.0 83.5 L661.0 88.7 L662.0 93.2 L663.0 89.1 L664.0 88.5 L665.0 95.1 L666.0 86.0 L667.0 85.6 L668.0 89.6 L669.0 89.7 L670.0 84.5 L671.0 84.1 L672.0 88.9 L673.0 88.8 L674.0 83.6 L675.0 87.3 L676.0 86.1 L677.0 89.4 L678.0 87.4 L679.0 87.5 L680.0 86.6 L681.0 91.2 L682.0 92.2 L683.0 86.4 L684.0 90.4 L685.0 85.0 L686.0 87.7 L687.0 89.9 L688.0 92.4 L689.0 86.1 L690.0 87.1 L691.0 87.9 L692.0 82.3 L693.0 87.3 L694.0 84.9 L695.0 88.3 L696.0 83.4 L697.0 80.5 L698.0 87.1 L699.0 87.8 L700.0 85.1 L701.0 89.8 L702.0 85.9 L703.0 84.8 L704.0 88.3 L705.0 81.5 L706.0 84.4 L707.0 86.6 L708.0 89.4 L709.0 86.0 L710.0 87.5 L711.0 84.3 L712.0 87.4 L713.0 91.9 L714.0 84.1 L715.0 94.1 L716.0 84.2 L717.0 86.3 L718.0 86.8 L719.0 89.5 L720.0 82.0 L721.0 79.1 L722.0 88.0 L723.0 88.6 L724.0 88.1 L725.0 94.0 L726.0 86.8 L727.0 87.0 L728.0 89.3 L729.0 87.5 L730.0 91.8 L731.0 82.2 L732.0 85.1 L733.0 78.5 L734.0 89.1 L735.0 85.3 L736.0 90.8 L737.0 96.1 L738.0 90.2 L739.0 90.7 L740.0 91.1 L741.0 91.2 L742.0 93.2 L743.0 98.5 L744.0 98.0 L745.0 99.3 L746.0 99.9 L747.0 104.5 L748.0 104.5 L749.0 103.9 L750.0 107.6 L751.0 106.4 L752.0 104.7 L753.0 113.8 L754.0 112.1 L755.0 109.1 L756.0 116.2 L757.0 114.9 L758.0 110.1 L759.0 120.6 L760.0 117.7 L761.0 120.3 L762.0 117.7 L763.0 115.3 L764.0 109.6 L765.0 115.8 L766.0 111.5 L767.0 109.1 L768.0 109.5 L769.0 107.1 L770.0 107.3 L771.0 102.6 L772.0 102.0 L773.0 94.2 L774.0 97.7 L775.0 100.4 L776.0 101.8 L777.0 96.0 L778.0 96.1 L779.0 100.6 L780.0 94.3 L781.0 96.8 L782.0 99.0 L783.0 93.5 L784.0 96.5 L785.0 90.2 L786.0 92.3 L787.0 90.9 L788.0 90.9 L789.0 93.4 L790.0 96.9 L791.0 87.4 L792.0 87.4 L793.0 90.3 L794.0 85.4 L795.0 89.8 L796.0 89.7 L797.0 87.2 L798.0 89.6 L799.0 83.4 L800.0 90.3 L801.0 83.4 L802.0 85.9 L803.0 86.3 L804.0 86.8 L805.0 90.6 L806.0 88.2 L807.0 86.8 L808.0 89.6 L809.0 92.7 L810.0 88.0 L811.0 89.1 L812.0 91.8 L813.0 89.0 L814.0 84.4 L815.0 95.5 L816.0 95.0 L817.0 82.5 L818.0 88.4 L819.0 89.9 L820.0 91.6 L821.0 90.8 L822.0 88.1 L823.0 85.8" fill="none" stroke="#0808c0" stroke-width="1.05" stroke-linejoin="round"/></svg>
<div style="left:762px;top:263px;width:1px;height:419px;background:#e9a93a"></div>
<div style="left:577px;top:685px;width:825px;height:16px;background:#f0f0f0"></div>
<svg style="left:582px;top:689px" width="5" height="8" viewBox="0 0 5 8"><path d="M4.5 0v8L.3 4z" fill="#404040"/></svg>
<svg style="left:1390px;top:689px" width="5" height="8" viewBox="0 0 5 8"><path d="M.5 0v8L4.7 4z" fill="#404040"/></svg>
<div style="left:1196px;top:685px;width:15px;height:16px;border:1px solid #979797;border-radius:2px;background:linear-gradient(#f4f4f4,#e6e6e6 48%,#d4d4d4 52%,#cbcbcb);box-shadow:inset 0 0 0 1px #fafafa"></div>
<div class="clip" style="left:579px;top:706px;width:354.5px;height:18px">
<span class="t ls" style="left:0.5px;top:1.5px;font-size:11px;line-height:15px;color:#111;transform:scaleX(0.9858);transform-origin:0 50%;">d:\acquisitions\20160728 eshel101_atik460 38420 revel\_qrvul_20160728_858_full.fits</span>
</div>
<span class="t ls" style="left:936.0px;top:707.5px;font-size:11px;line-height:15px;color:#111;transform:scaleX(0.9457);transform-origin:0 50%;">QR Vul II.fits</span>
<span class="t ls" style="left:1105.0px;top:707.5px;font-size:11px;line-height:15px;color:#111;transform:scaleX(0.9714);transform-origin:0 50%;">2016-07-28T20:36:11</span>
<span class="t ls" style="left:1256.0px;top:707.5px;font-size:11px;line-height:15px;color:#111;transform:scaleX(0.9286);transform-origin:0 50%;">606 s</span>
<span class="t ls" style="left:579.5px;top:735.5px;font-size:11px;line-height:15px;color:#111;transform:scaleX(0.9622);transform-origin:0 50%;">Longueur d'onde :</span>
<div style="left:675px;top:733px;width:61px;height:20px;background:#f0f0f0;border:1px solid #e3e3e3;border-top-color:#abadb3"></div>
<span class="t ls" style="left:678.0px;top:735.5px;font-size:11px;line-height:15px;color:#111;transform:scaleX(0.9806);transform-origin:0 50%;">6562.900</span>
<span class="t ls" style="left:764.0px;top:735.5px;font-size:11px;line-height:15px;color:#111;transform:scaleX(0.9643);transform-origin:0 50%;">Intensité :</span>
<div style="left:820px;top:733px;width:94px;height:20px;background:#f0f0f0;border:1px solid #e3e3e3;border-top-color:#abadb3"></div>
<span class="t ls" style="left:823.0px;top:735.5px;font-size:11px;line-height:15px;color:#111;transform:scaleX(0.9806);transform-origin:0 50%;">0.932377</span>
<div style="left:974px;top:738px;width:13px;height:13px;border:1px solid #8e8f8f;background:linear-gradient(135deg,#dcdcdc,#f6f6f6 60%,#fff);box-shadow:inset 0 0 0 1px #f4f4f4"></div>
<span class="t ls" style="left:993.0px;top:736.5px;font-size:11px;line-height:15px;color:#111;transform:scaleX(0.9388);transform-origin:0 50%;">Seuils automatiques</span>
<span class="t ls" style="left:1123.0px;top:735.5px;font-size:11px;line-height:15px;color:#111;transform:scaleX(0.9628);transform-origin:0 50%;">Seuil haut :</span>
<div style="left:1186px;top:733px;width:45px;height:20px;background:#fff;border:1px solid #e3e9ef;border-top-color:#abadb3"></div>
<span class="t ls" style="left:1189.0px;top:735.5px;font-size:11px;line-height:15px;color:#111;">1.2</span>
<span class="t ls" style="left:1257.0px;top:735.5px;font-size:11px;line-height:15px;color:#111;transform:scaleX(0.9343);transform-origin:0 50%;">Seuil bas :</span>
<div style="left:1316px;top:733px;width:45px;height:20px;background:#fff;border:1px solid #e3e9ef;border-top-color:#abadb3"></div>
<span class="t ls" style="left:1319.0px;top:735.5px;font-size:11px;line-height:15px;color:#111;">0</span>
</div>
</body></html>
